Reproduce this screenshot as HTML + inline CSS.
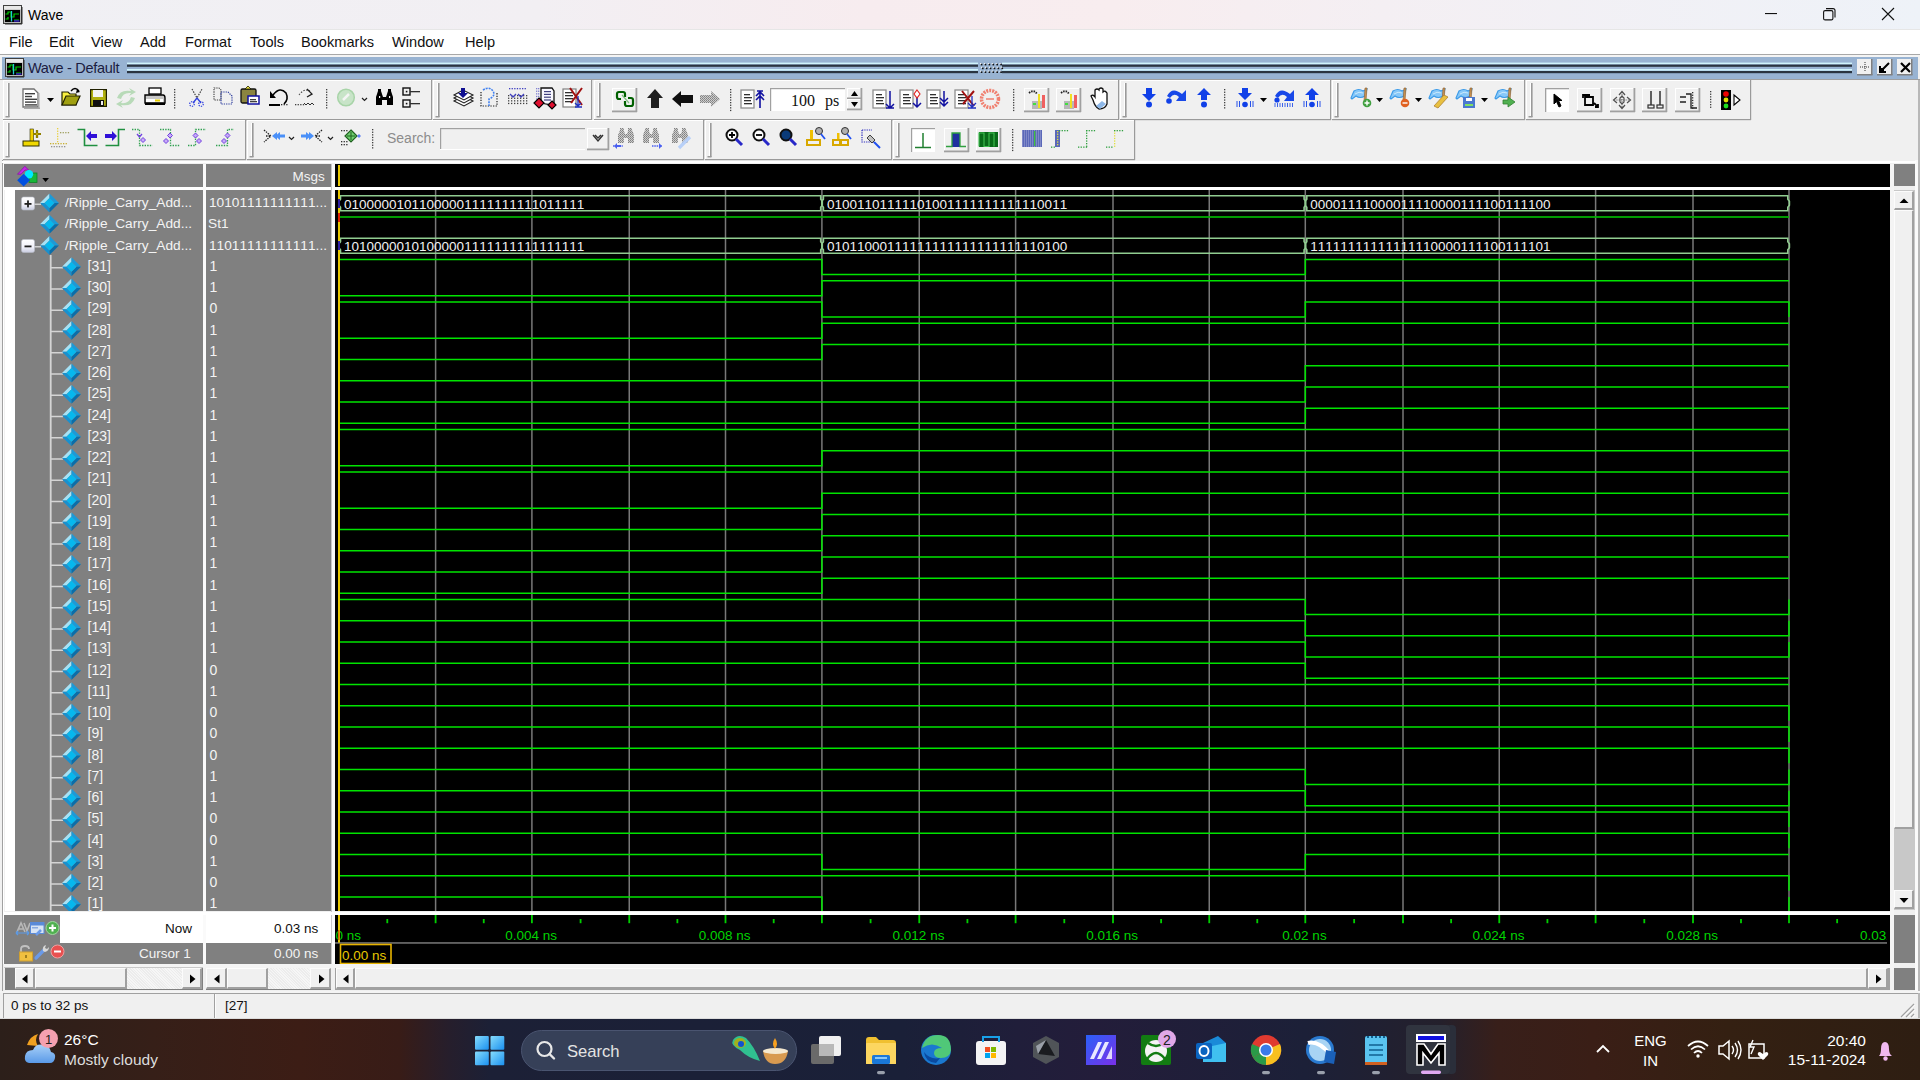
<!DOCTYPE html><html><head><meta charset="utf-8"><style>
*{margin:0;padding:0;box-sizing:border-box}
html,body{width:1920px;height:1080px;overflow:hidden;background:#f0f0f0;font-family:"Liberation Sans",sans-serif}
.a{position:absolute}
.t{position:absolute;white-space:nowrap;line-height:1}
svg{position:absolute;overflow:visible}
</style></head><body><div style="position:absolute;left:0px;top:0px;width:1920px;height:30px;background:linear-gradient(90deg,#f0f0f4 0%,#f2eff3 28%,#f7ecef 45%,#f8edef 58%,#f4eff3 72%,#eef2f8 100%)"></div>
<div style="position:absolute;left:0px;top:29px;width:1920px;height:1px;background:#e6e6e6"></div>
<div style="position:absolute;left:0px;top:30px;width:1920px;height:25px;background:#ffffff"></div>
<div style="position:absolute;left:0px;top:54px;width:1920px;height:1px;background:#a8a8a8"></div>
<div style="position:absolute;left:0px;top:55px;width:1920px;height:2px;background:#f4f4f4"></div>
<div style="position:absolute;left:2px;top:57px;width:1916px;height:22px;background:#98b3d2"></div>
<div style="position:absolute;left:0px;top:79px;width:1920px;height:1px;background:#a0a0a0"></div>
<div style="position:absolute;left:0px;top:80px;width:1920px;height:80px;background:#f0f0f0"></div>
<div style="position:absolute;left:2px;top:160px;width:1916px;height:832px;background:#f0f0f0"></div>
<div style="position:absolute;left:0px;top:992px;width:1920px;height:28px;background:#f0f0f0"></div>
<div style="position:absolute;left:4px;top:164px;width:199px;height:23px;background:#808080"></div>
<div style="position:absolute;left:206px;top:164px;width:125px;height:23px;background:#808080"></div>
<div style="position:absolute;left:292.5px;top:169.5px;font-size:13.5px;color:#f4f4f4;white-space:nowrap;line-height:1;">Msgs</div>
<div style="position:absolute;left:335px;top:164px;width:1555px;height:23px;background:#000"></div>
<div style="position:absolute;left:338px;top:165px;width:2px;height:21px;background:#e8c800"></div>
<div style="position:absolute;left:1894px;top:164px;width:21px;height:22px;background:#808080"></div>
<div style="position:absolute;left:4px;top:187px;width:1886px;height:3px;background:#fff"></div>
<div style="position:absolute;left:203px;top:164px;width:3px;height:800px;background:#fafafa"></div>
<div style="position:absolute;left:331px;top:164px;width:4px;height:800px;background:#fafafa"></div>
<div style="position:absolute;left:331px;top:164px;width:1px;height:800px;background:#c8c8c8"></div>
<div style="position:absolute;left:2px;top:160px;width:1px;height:832px;background:#a0a0a0"></div>
<div style="position:absolute;left:3px;top:164px;width:1px;height:800px;background:#ffffff"></div>
<div style="position:absolute;left:4px;top:190px;width:1px;height:721px;background:#f0f0f0"></div>
<div style="position:absolute;left:5px;top:190px;width:10px;height:721px;background:#fff"></div>
<div style="position:absolute;left:15px;top:190px;width:188px;height:721px;background:#808080"></div>
<div style="position:absolute;left:206px;top:190px;width:125px;height:721px;background:#808080"></div>
<div style="position:absolute;left:335px;top:190px;width:1555px;height:721px;background:#000"></div>
<div style="position:absolute;left:4px;top:911.6px;width:1886px;height:3.4px;background:#fff"></div>
<div style="position:absolute;left:4px;top:915px;width:56px;height:28px;background:#808080"></div>
<div style="position:absolute;left:60px;top:915px;width:143px;height:28px;background:#fff"></div>
<div style="position:absolute;left:206px;top:915px;width:125px;height:28px;background:#fff"></div>
<div style="position:absolute;left:335px;top:915px;width:1555px;height:28px;background:#000"></div>
<div style="position:absolute;left:165px;top:922px;font-size:13.5px;color:#101010;white-space:nowrap;line-height:1;">Now</div>
<div style="position:absolute;left:274px;top:922px;font-size:13.5px;color:#101010;white-space:nowrap;line-height:1;">0.03 ns</div>
<div style="position:absolute;left:4px;top:943px;width:199px;height:21px;background:#808080"></div>
<div style="position:absolute;left:206px;top:943px;width:125px;height:21px;background:#808080"></div>
<div style="position:absolute;left:335px;top:943px;width:1555px;height:21px;background:#000"></div>
<div style="position:absolute;left:335px;top:942px;width:1552px;height:1px;background:#5a5a5a"></div>
<div style="position:absolute;left:139px;top:947px;font-size:13.5px;color:#f4f4f4;white-space:nowrap;line-height:1;">Cursor 1</div>
<div style="position:absolute;left:274px;top:947px;font-size:13.5px;color:#f4f4f4;white-space:nowrap;line-height:1;">0.00 ns</div>
<div style="position:absolute;left:4px;top:964px;width:1886px;height:4px;background:#f4f4f4"></div>
<div style="position:absolute;left:1890px;top:164px;width:4px;height:827px;background:#f4f4f4"></div>
<div style="position:absolute;left:1894px;top:915px;width:21px;height:48px;background:#808080"></div>
<div style="position:absolute;left:1894px;top:968px;width:21px;height:22px;background:#808080"></div>
<svg style="left:0;top:0" width="1920" height="1080" viewBox="0 0 1920 1080"><defs><clipPath id="wc"><rect x="335" y="190" width="1555" height="721"/></clipPath></defs><g clip-path="url(#wc)" font-family="Liberation Sans"><rect x="434.85" y="190" width="1.5" height="721" fill="#787878"/><rect x="531.15" y="190" width="1.5" height="721" fill="#787878"/><rect x="628.50" y="190" width="1.5" height="721" fill="#787878"/><rect x="724.75" y="190" width="1.5" height="721" fill="#787878"/><rect x="821.15" y="190" width="1.5" height="721" fill="#787878"/><rect x="918.50" y="190" width="1.5" height="721" fill="#787878"/><rect x="1014.85" y="190" width="1.5" height="721" fill="#787878"/><rect x="1112.25" y="190" width="1.5" height="721" fill="#787878"/><rect x="1208.50" y="190" width="1.5" height="721" fill="#787878"/><rect x="1304.55" y="190" width="1.5" height="721" fill="#787878"/><rect x="1402.25" y="190" width="1.5" height="721" fill="#787878"/><rect x="1498.50" y="190" width="1.5" height="721" fill="#787878"/><rect x="1594.85" y="190" width="1.5" height="721" fill="#787878"/><rect x="1692.25" y="190" width="1.5" height="721" fill="#787878"/><rect x="1788.25" y="190" width="1.5" height="721" fill="#787878"/><rect x="339" y="216.15" width="1450" height="1.7" fill="#00b400"/><path d="M339,259.50 H821.9 V274.50 H1305.3 V259.50 H1789.0" fill="none" stroke="#00e400" stroke-width="1.55"/><path d="M339,295.75 H821.9 V280.75 H1305.3 H1789.0" fill="none" stroke="#00e400" stroke-width="1.55"/><path d="M339,302.00 H821.9 V317.00 H1305.3 V302.00 H1789.0 V317.00" fill="none" stroke="#00e400" stroke-width="1.55"/><path d="M339,338.25 H821.9 V323.25 H1305.3 H1789.0" fill="none" stroke="#00e400" stroke-width="1.55"/><path d="M339,359.50 H821.9 V344.50 H1305.3 H1789.0" fill="none" stroke="#00e400" stroke-width="1.55"/><path d="M339,380.75 H821.9 H1305.3 V365.75 H1789.0" fill="none" stroke="#00e400" stroke-width="1.55"/><path d="M339,402.00 H821.9 H1305.3 V387.00 H1789.0" fill="none" stroke="#00e400" stroke-width="1.55"/><path d="M339,423.25 H821.9 H1305.3 V408.25 H1789.0" fill="none" stroke="#00e400" stroke-width="1.55"/><path d="M339,429.50 H821.9 H1305.3 H1789.0" fill="none" stroke="#00e400" stroke-width="1.55"/><path d="M339,465.75 H821.9 V450.75 H1305.3 H1789.0" fill="none" stroke="#00e400" stroke-width="1.55"/><path d="M339,472.00 H821.9 H1305.3 H1789.0" fill="none" stroke="#00e400" stroke-width="1.55"/><path d="M339,508.25 H821.9 V493.25 H1305.3 H1789.0" fill="none" stroke="#00e400" stroke-width="1.55"/><path d="M339,529.50 H821.9 V514.50 H1305.3 H1789.0" fill="none" stroke="#00e400" stroke-width="1.55"/><path d="M339,550.75 H821.9 V535.75 H1305.3 H1789.0" fill="none" stroke="#00e400" stroke-width="1.55"/><path d="M339,572.00 H821.9 V557.00 H1305.3 H1789.0" fill="none" stroke="#00e400" stroke-width="1.55"/><path d="M339,593.25 H821.9 V578.25 H1305.3 H1789.0" fill="none" stroke="#00e400" stroke-width="1.55"/><path d="M339,599.50 H821.9 H1305.3 V614.50 H1789.0 V599.50" fill="none" stroke="#00e400" stroke-width="1.55"/><path d="M339,620.75 H821.9 H1305.3 V635.75 H1789.0 V620.75" fill="none" stroke="#00e400" stroke-width="1.55"/><path d="M339,642.00 H821.9 H1305.3 V657.00 H1789.0 V642.00" fill="none" stroke="#00e400" stroke-width="1.55"/><path d="M339,663.25 H821.9 H1305.3 V678.25 H1789.0" fill="none" stroke="#00e400" stroke-width="1.55"/><path d="M339,684.50 H821.9 H1305.3 H1789.0" fill="none" stroke="#00e400" stroke-width="1.55"/><path d="M339,705.75 H821.9 H1305.3 H1789.0 V720.75" fill="none" stroke="#00e400" stroke-width="1.55"/><path d="M339,727.00 H821.9 H1305.3 H1789.0 V742.00" fill="none" stroke="#00e400" stroke-width="1.55"/><path d="M339,748.25 H821.9 H1305.3 H1789.0 V763.25" fill="none" stroke="#00e400" stroke-width="1.55"/><path d="M339,769.50 H821.9 H1305.3 V784.50 H1789.0 V769.50" fill="none" stroke="#00e400" stroke-width="1.55"/><path d="M339,790.75 H821.9 H1305.3 V805.75 H1789.0 V790.75" fill="none" stroke="#00e400" stroke-width="1.55"/><path d="M339,812.00 H821.9 H1305.3 H1789.0 V827.00" fill="none" stroke="#00e400" stroke-width="1.55"/><path d="M339,833.25 H821.9 H1305.3 H1789.0 V848.25" fill="none" stroke="#00e400" stroke-width="1.55"/><path d="M339,854.50 H821.9 V869.50 H1305.3 V854.50 H1789.0" fill="none" stroke="#00e400" stroke-width="1.55"/><path d="M339,875.75 H821.9 H1305.3 H1789.0 V890.75" fill="none" stroke="#00e400" stroke-width="1.55"/><path d="M339,897.00 H821.9 V912.00 H1305.3 H1789.0 V897.00" fill="none" stroke="#00e400" stroke-width="1.55"/><path d="M340.5,195.75 H820.6999999999999 V199.25 L822.3,201.25 V205.25 L820.6999999999999,207.25 V210.75 H340.5 V207.25 L338.9,205.25 V201.25 L340.5,199.25 Z" fill="none" stroke="#90cc90" stroke-width="1.6"/><text x="344.0" y="208.55" font-size="13.5" fill="#f2f2f2" style="font-kerning:none">01000001011000001111111111011111</text><path d="M823.4,195.75 H1304.1 V199.25 L1305.7,201.25 V205.25 L1304.1,207.25 V210.75 H823.4 V207.25 L821.8,205.25 V201.25 L823.4,199.25 Z" fill="none" stroke="#90cc90" stroke-width="1.6"/><text x="826.9" y="208.55" font-size="13.5" fill="#f2f2f2" style="font-kerning:none">01001101111101001111111111110011</text><path d="M1306.8,195.75 H1787.8 V199.25 L1789.4,201.25 V205.25 L1787.8,207.25 V210.75 H1306.8 V207.25 L1305.2,205.25 V201.25 L1306.8,199.25 Z" fill="none" stroke="#90cc90" stroke-width="1.6"/><text x="1310.3" y="208.55" font-size="13.5" fill="#f2f2f2" style="font-kerning:none">00001111000011110000111100111100</text><path d="M340.5,238.25 H820.6999999999999 V241.75 L822.3,243.75 V247.75 L820.6999999999999,249.75 V253.25 H340.5 V249.75 L338.9,247.75 V243.75 L340.5,241.75 Z" fill="none" stroke="#90cc90" stroke-width="1.6"/><text x="344.0" y="251.05" font-size="13.5" fill="#f2f2f2" style="font-kerning:none">10100000101000001111111111111111</text><path d="M823.4,238.25 H1304.1 V241.75 L1305.7,243.75 V247.75 L1304.1,249.75 V253.25 H823.4 V249.75 L821.8,247.75 V243.75 L823.4,241.75 Z" fill="none" stroke="#90cc90" stroke-width="1.6"/><text x="826.9" y="251.05" font-size="13.5" fill="#f2f2f2" style="font-kerning:none">01011000111111111111111111110100</text><path d="M1306.8,238.25 H1787.8 V241.75 L1789.4,243.75 V247.75 L1787.8,249.75 V253.25 H1306.8 V249.75 L1305.2,247.75 V243.75 L1306.8,241.75 Z" fill="none" stroke="#90cc90" stroke-width="1.6"/><text x="1310.3" y="251.05" font-size="13.5" fill="#f2f2f2" style="font-kerning:none">11111111111111110000111100111101</text><rect x="338" y="190" width="2" height="721" fill="#e8c800"/><rect x="338" y="199" width="2" height="9" fill="#3020a0"/><rect x="338" y="213" width="2" height="9" fill="#e02000"/><rect x="338" y="241" width="2" height="9" fill="#3020a0"/></g></svg>
<svg style="left:0;top:0" width="1920" height="1080" viewBox="0 0 1920 1080"><defs><clipPath id="nc"><rect x="4" y="190" width="199" height="721"/></clipPath><clipPath id="vc"><rect x="206" y="190" width="125" height="721"/></clipPath></defs><g clip-path="url(#nc)" font-family="Liberation Sans"><defs><symbol id="dm" viewBox="0 0 19 19"><path d="M9.5,0 L0,9.5 L4.5,9.5 L9.5,4.5Z" fill="#a6e2f6"/><path d="M9.5,0 L19,9.5 L14.5,9.5 L9.5,4.5Z" fill="#1c9ad8"/><path d="M0,9.5 L9.5,19 L9.5,14.5 L4.5,9.5Z" fill="#1890cf"/><path d="M19,9.5 L9.5,19 L9.5,14.5 L14.5,9.5Z" fill="#0b6ea9"/><path d="M9.5,4.5 L14.5,9.5 L9.5,14.5 L4.5,9.5Z" fill="#06b8ee"/></symbol><linearGradient id="pb" x1="0" y1="0" x2="0" y2="1"><stop offset="0" stop-color="#ffffff"/><stop offset="0.6" stop-color="#f0f0f8"/><stop offset="1" stop-color="#c8cce0"/></linearGradient></defs><use href="#dm" x="40" y="193.50" width="19" height="19"/><rect x="34" y="203.50" width="7" height="1.5" fill="#d0d0d0"/><rect x="21.5" y="197.00" width="13" height="13" rx="2" fill="url(#pb)" stroke="#b8bcc8" stroke-width="0.6"/><rect x="24.5" y="203.00" width="7" height="1.8" fill="#202020"/><rect x="27.1" y="200.40" width="1.8" height="7" fill="#202020"/><text x="65" y="207.20" font-size="13.7" fill="#f4f4f4">/Ripple_Carry_Add...</text><use href="#dm" x="40" y="214.75" width="19" height="19"/><text x="65" y="228.45" font-size="13.7" fill="#f4f4f4">/Ripple_Carry_Add...</text><use href="#dm" x="40" y="236.00" width="19" height="19"/><rect x="34" y="246.00" width="7" height="1.5" fill="#d0d0d0"/><rect x="21.5" y="239.50" width="13" height="13" rx="2" fill="url(#pb)" stroke="#b8bcc8" stroke-width="0.6"/><rect x="24.5" y="245.50" width="7" height="1.8" fill="#202020"/><text x="65" y="249.70" font-size="13.7" fill="#f4f4f4">/Ripple_Carry_Add...</text><rect x="49.8" y="255" width="1.8" height="656" fill="#d4d4d4"/><rect x="50" y="267.00" width="13" height="1.5" fill="#d4d4d4"/><use href="#dm" x="62" y="257.25" width="19" height="19"/><text x="87.5" y="270.95" font-size="14" fill="#f4f4f4">[31]</text><rect x="50" y="288.25" width="13" height="1.5" fill="#d4d4d4"/><use href="#dm" x="62" y="278.50" width="19" height="19"/><text x="87.5" y="292.20" font-size="14" fill="#f4f4f4">[30]</text><rect x="50" y="309.50" width="13" height="1.5" fill="#d4d4d4"/><use href="#dm" x="62" y="299.75" width="19" height="19"/><text x="87.5" y="313.45" font-size="14" fill="#f4f4f4">[29]</text><rect x="50" y="330.75" width="13" height="1.5" fill="#d4d4d4"/><use href="#dm" x="62" y="321.00" width="19" height="19"/><text x="87.5" y="334.70" font-size="14" fill="#f4f4f4">[28]</text><rect x="50" y="352.00" width="13" height="1.5" fill="#d4d4d4"/><use href="#dm" x="62" y="342.25" width="19" height="19"/><text x="87.5" y="355.95" font-size="14" fill="#f4f4f4">[27]</text><rect x="50" y="373.25" width="13" height="1.5" fill="#d4d4d4"/><use href="#dm" x="62" y="363.50" width="19" height="19"/><text x="87.5" y="377.20" font-size="14" fill="#f4f4f4">[26]</text><rect x="50" y="394.50" width="13" height="1.5" fill="#d4d4d4"/><use href="#dm" x="62" y="384.75" width="19" height="19"/><text x="87.5" y="398.45" font-size="14" fill="#f4f4f4">[25]</text><rect x="50" y="415.75" width="13" height="1.5" fill="#d4d4d4"/><use href="#dm" x="62" y="406.00" width="19" height="19"/><text x="87.5" y="419.70" font-size="14" fill="#f4f4f4">[24]</text><rect x="50" y="437.00" width="13" height="1.5" fill="#d4d4d4"/><use href="#dm" x="62" y="427.25" width="19" height="19"/><text x="87.5" y="440.95" font-size="14" fill="#f4f4f4">[23]</text><rect x="50" y="458.25" width="13" height="1.5" fill="#d4d4d4"/><use href="#dm" x="62" y="448.50" width="19" height="19"/><text x="87.5" y="462.20" font-size="14" fill="#f4f4f4">[22]</text><rect x="50" y="479.50" width="13" height="1.5" fill="#d4d4d4"/><use href="#dm" x="62" y="469.75" width="19" height="19"/><text x="87.5" y="483.45" font-size="14" fill="#f4f4f4">[21]</text><rect x="50" y="500.75" width="13" height="1.5" fill="#d4d4d4"/><use href="#dm" x="62" y="491.00" width="19" height="19"/><text x="87.5" y="504.70" font-size="14" fill="#f4f4f4">[20]</text><rect x="50" y="522.00" width="13" height="1.5" fill="#d4d4d4"/><use href="#dm" x="62" y="512.25" width="19" height="19"/><text x="87.5" y="525.95" font-size="14" fill="#f4f4f4">[19]</text><rect x="50" y="543.25" width="13" height="1.5" fill="#d4d4d4"/><use href="#dm" x="62" y="533.50" width="19" height="19"/><text x="87.5" y="547.20" font-size="14" fill="#f4f4f4">[18]</text><rect x="50" y="564.50" width="13" height="1.5" fill="#d4d4d4"/><use href="#dm" x="62" y="554.75" width="19" height="19"/><text x="87.5" y="568.45" font-size="14" fill="#f4f4f4">[17]</text><rect x="50" y="585.75" width="13" height="1.5" fill="#d4d4d4"/><use href="#dm" x="62" y="576.00" width="19" height="19"/><text x="87.5" y="589.70" font-size="14" fill="#f4f4f4">[16]</text><rect x="50" y="607.00" width="13" height="1.5" fill="#d4d4d4"/><use href="#dm" x="62" y="597.25" width="19" height="19"/><text x="87.5" y="610.95" font-size="14" fill="#f4f4f4">[15]</text><rect x="50" y="628.25" width="13" height="1.5" fill="#d4d4d4"/><use href="#dm" x="62" y="618.50" width="19" height="19"/><text x="87.5" y="632.20" font-size="14" fill="#f4f4f4">[14]</text><rect x="50" y="649.50" width="13" height="1.5" fill="#d4d4d4"/><use href="#dm" x="62" y="639.75" width="19" height="19"/><text x="87.5" y="653.45" font-size="14" fill="#f4f4f4">[13]</text><rect x="50" y="670.75" width="13" height="1.5" fill="#d4d4d4"/><use href="#dm" x="62" y="661.00" width="19" height="19"/><text x="87.5" y="674.70" font-size="14" fill="#f4f4f4">[12]</text><rect x="50" y="692.00" width="13" height="1.5" fill="#d4d4d4"/><use href="#dm" x="62" y="682.25" width="19" height="19"/><text x="87.5" y="695.95" font-size="14" fill="#f4f4f4">[11]</text><rect x="50" y="713.25" width="13" height="1.5" fill="#d4d4d4"/><use href="#dm" x="62" y="703.50" width="19" height="19"/><text x="87.5" y="717.20" font-size="14" fill="#f4f4f4">[10]</text><rect x="50" y="734.50" width="13" height="1.5" fill="#d4d4d4"/><use href="#dm" x="62" y="724.75" width="19" height="19"/><text x="87.5" y="738.45" font-size="14" fill="#f4f4f4">[9]</text><rect x="50" y="755.75" width="13" height="1.5" fill="#d4d4d4"/><use href="#dm" x="62" y="746.00" width="19" height="19"/><text x="87.5" y="759.70" font-size="14" fill="#f4f4f4">[8]</text><rect x="50" y="777.00" width="13" height="1.5" fill="#d4d4d4"/><use href="#dm" x="62" y="767.25" width="19" height="19"/><text x="87.5" y="780.95" font-size="14" fill="#f4f4f4">[7]</text><rect x="50" y="798.25" width="13" height="1.5" fill="#d4d4d4"/><use href="#dm" x="62" y="788.50" width="19" height="19"/><text x="87.5" y="802.20" font-size="14" fill="#f4f4f4">[6]</text><rect x="50" y="819.50" width="13" height="1.5" fill="#d4d4d4"/><use href="#dm" x="62" y="809.75" width="19" height="19"/><text x="87.5" y="823.45" font-size="14" fill="#f4f4f4">[5]</text><rect x="50" y="840.75" width="13" height="1.5" fill="#d4d4d4"/><use href="#dm" x="62" y="831.00" width="19" height="19"/><text x="87.5" y="844.70" font-size="14" fill="#f4f4f4">[4]</text><rect x="50" y="862.00" width="13" height="1.5" fill="#d4d4d4"/><use href="#dm" x="62" y="852.25" width="19" height="19"/><text x="87.5" y="865.95" font-size="14" fill="#f4f4f4">[3]</text><rect x="50" y="883.25" width="13" height="1.5" fill="#d4d4d4"/><use href="#dm" x="62" y="873.50" width="19" height="19"/><text x="87.5" y="887.20" font-size="14" fill="#f4f4f4">[2]</text><rect x="50" y="904.50" width="13" height="1.5" fill="#d4d4d4"/><use href="#dm" x="62" y="894.75" width="19" height="19"/><text x="87.5" y="908.45" font-size="14" fill="#f4f4f4">[1]</text></g><g clip-path="url(#vc)" font-family="Liberation Sans"><text x="209" y="207.20" font-size="13.7" fill="#f4f4f4" style="font-kerning:none">10101111111111...</text><text x="208" y="228.45" font-size="13.7" fill="#f4f4f4" style="font-kerning:none">St1</text><text x="209" y="249.70" font-size="13.7" fill="#f4f4f4" style="font-kerning:none">11011111111111...</text><text x="209.5" y="270.95" font-size="14" fill="#f4f4f4">1</text><text x="209.5" y="292.20" font-size="14" fill="#f4f4f4">1</text><text x="209.5" y="313.45" font-size="14" fill="#f4f4f4">0</text><text x="209.5" y="334.70" font-size="14" fill="#f4f4f4">1</text><text x="209.5" y="355.95" font-size="14" fill="#f4f4f4">1</text><text x="209.5" y="377.20" font-size="14" fill="#f4f4f4">1</text><text x="209.5" y="398.45" font-size="14" fill="#f4f4f4">1</text><text x="209.5" y="419.70" font-size="14" fill="#f4f4f4">1</text><text x="209.5" y="440.95" font-size="14" fill="#f4f4f4">1</text><text x="209.5" y="462.20" font-size="14" fill="#f4f4f4">1</text><text x="209.5" y="483.45" font-size="14" fill="#f4f4f4">1</text><text x="209.5" y="504.70" font-size="14" fill="#f4f4f4">1</text><text x="209.5" y="525.95" font-size="14" fill="#f4f4f4">1</text><text x="209.5" y="547.20" font-size="14" fill="#f4f4f4">1</text><text x="209.5" y="568.45" font-size="14" fill="#f4f4f4">1</text><text x="209.5" y="589.70" font-size="14" fill="#f4f4f4">1</text><text x="209.5" y="610.95" font-size="14" fill="#f4f4f4">1</text><text x="209.5" y="632.20" font-size="14" fill="#f4f4f4">1</text><text x="209.5" y="653.45" font-size="14" fill="#f4f4f4">1</text><text x="209.5" y="674.70" font-size="14" fill="#f4f4f4">0</text><text x="209.5" y="695.95" font-size="14" fill="#f4f4f4">1</text><text x="209.5" y="717.20" font-size="14" fill="#f4f4f4">0</text><text x="209.5" y="738.45" font-size="14" fill="#f4f4f4">0</text><text x="209.5" y="759.70" font-size="14" fill="#f4f4f4">0</text><text x="209.5" y="780.95" font-size="14" fill="#f4f4f4">1</text><text x="209.5" y="802.20" font-size="14" fill="#f4f4f4">1</text><text x="209.5" y="823.45" font-size="14" fill="#f4f4f4">0</text><text x="209.5" y="844.70" font-size="14" fill="#f4f4f4">0</text><text x="209.5" y="865.95" font-size="14" fill="#f4f4f4">1</text><text x="209.5" y="887.20" font-size="14" fill="#f4f4f4">0</text><text x="209.5" y="908.45" font-size="14" fill="#f4f4f4">1</text></g></svg>
<svg style="left:0;top:0" width="60" height="200" viewBox="0 0 60 200"><path d="M24.8,166.3 L17.5,174.2 L21,174.2 L25,170 L28.8,170.2Z" fill="#c828e8" stroke="#8a10a8" stroke-width="0.8"/><rect x="29" y="173" width="8" height="9.5" fill="#18b838" stroke="#108028" stroke-width="0.8"/><circle cx="29" cy="174.2" r="4.2" fill="#00e8ff"/><path d="M23.6,173.7 L30,180.2 L23.6,186.6 L17.2,180.2Z" fill="#0050e0"/><path d="M42.3,178 L49,178 L45.6,182Z" fill="#000"/></svg>
<svg style="left:0;top:0" width="1920" height="1080" viewBox="0 0 1920 1080"><defs><clipPath id="tc"><rect x="335" y="915" width="1552" height="49"/></clipPath></defs><g clip-path="url(#tc)" font-family="Liberation Sans"><rect x="386.40" y="919" width="1.8" height="4.2" fill="#00d000"/><rect x="434.70" y="915" width="1.8" height="8.2" fill="#00d000"/><rect x="482.85" y="919" width="1.8" height="4.2" fill="#00d000"/><rect x="531.00" y="915" width="1.8" height="8.2" fill="#00d000"/><rect x="579.68" y="919" width="1.8" height="4.2" fill="#00d000"/><rect x="628.35" y="915" width="1.8" height="8.2" fill="#00d000"/><rect x="676.48" y="919" width="1.8" height="4.2" fill="#00d000"/><rect x="724.60" y="915" width="1.8" height="8.2" fill="#00d000"/><rect x="772.80" y="919" width="1.8" height="4.2" fill="#00d000"/><rect x="821.00" y="915" width="1.8" height="8.2" fill="#00d000"/><rect x="869.68" y="919" width="1.8" height="4.2" fill="#00d000"/><rect x="918.35" y="915" width="1.8" height="8.2" fill="#00d000"/><rect x="966.52" y="919" width="1.8" height="4.2" fill="#00d000"/><rect x="1014.70" y="915" width="1.8" height="8.2" fill="#00d000"/><rect x="1063.40" y="919" width="1.8" height="4.2" fill="#00d000"/><rect x="1112.10" y="915" width="1.8" height="8.2" fill="#00d000"/><rect x="1160.22" y="919" width="1.8" height="4.2" fill="#00d000"/><rect x="1208.35" y="915" width="1.8" height="8.2" fill="#00d000"/><rect x="1256.38" y="919" width="1.8" height="4.2" fill="#00d000"/><rect x="1304.40" y="915" width="1.8" height="8.2" fill="#00d000"/><rect x="1353.25" y="919" width="1.8" height="4.2" fill="#00d000"/><rect x="1402.10" y="915" width="1.8" height="8.2" fill="#00d000"/><rect x="1450.22" y="919" width="1.8" height="4.2" fill="#00d000"/><rect x="1498.35" y="915" width="1.8" height="8.2" fill="#00d000"/><rect x="1546.52" y="919" width="1.8" height="4.2" fill="#00d000"/><rect x="1594.70" y="915" width="1.8" height="8.2" fill="#00d000"/><rect x="1643.40" y="919" width="1.8" height="4.2" fill="#00d000"/><rect x="1692.10" y="915" width="1.8" height="8.2" fill="#00d000"/><rect x="1740.10" y="919" width="1.8" height="4.2" fill="#00d000"/><rect x="1788.10" y="915" width="1.8" height="8.2" fill="#00d000"/><rect x="1836.25" y="919" width="1.8" height="4.2" fill="#00d000"/><text x="531.1" y="940" font-size="13.5" fill="#00d400" text-anchor="middle">0.004 ns</text><text x="724.7" y="940" font-size="13.5" fill="#00d400" text-anchor="middle">0.008 ns</text><text x="918.5" y="940" font-size="13.5" fill="#00d400" text-anchor="middle">0.012 ns</text><text x="1112.2" y="940" font-size="13.5" fill="#00d400" text-anchor="middle">0.016 ns</text><text x="1304.5" y="940" font-size="13.5" fill="#00d400" text-anchor="middle">0.02 ns</text><text x="1498.5" y="940" font-size="13.5" fill="#00d400" text-anchor="middle">0.024 ns</text><text x="1692.2" y="940" font-size="13.5" fill="#00d400" text-anchor="middle">0.028 ns</text><text x="335.5" y="940" font-size="13.5" fill="#00d400">0 ns</text><text x="1860" y="940" font-size="13.5" fill="#00d400">0.032 ns</text><rect x="338" y="915" width="2" height="28" fill="#e8c800"/><rect x="338" y="930" width="1.5" height="10" fill="#c02000" opacity="0.6"/><rect x="335" y="942.6" width="1552" height="1.2" fill="#6a6a6a"/><rect x="340.5" y="944.5" width="50.5" height="19" fill="none" stroke="#e8b400" stroke-width="1.6"/><text x="342" y="960" font-size="13.5" fill="#e8c800">0.00 ns</text></g></svg>
<div style="position:absolute;left:4px;top:967px;width:199px;height:1px;background:#c8c8c8"></div>
<div style="position:absolute;left:5px;top:968px;width:198px;height:22px;background:#808080"></div>
<div style="position:absolute;left:206px;top:968px;width:125px;height:22px;background:#808080"></div>
<div style="position:absolute;left:335px;top:968px;width:1555px;height:22px;background:#a0a0a0"></div>
<div style="position:absolute;left:127px;top:968px;width:55px;height:21px;background-color:#f6f6f6;background-image:repeating-linear-gradient(45deg,#ececec 0 1px,transparent 1px 2px)"></div>
<div class="a" style="left:15px;top:968px;width:20px;height:21px;background:#f0f0f0;border-top:1px solid #fcfcfc;border-left:1px solid #fcfcfc;border-right:2px solid #a0a0a0;border-bottom:2px solid #a0a0a0"><svg style="left:5.0px;top:4.5px" width="8" height="10"><path d="M6.5,0.5 L1,5 L6.5,9.5Z" fill="#000"/></svg></div>
<div class="a" style="left:35px;top:968px;width:92px;height:21px;background:#f0f0f0;border-top:1px solid #fcfcfc;border-left:1px solid #fcfcfc;border-right:2px solid #a0a0a0;border-bottom:2px solid #a0a0a0"></div>
<div class="a" style="left:182px;top:968px;width:20px;height:21px;background:#f0f0f0;border-top:1px solid #fcfcfc;border-left:1px solid #fcfcfc;border-right:2px solid #a0a0a0;border-bottom:2px solid #a0a0a0"><svg style="left:6.0px;top:4.5px" width="8" height="10"><path d="M1,0.5 L6.5,5 L1,9.5Z" fill="#000"/></svg></div>
<div style="position:absolute;left:268px;top:968px;width:43px;height:21px;background-color:#f6f6f6;background-image:repeating-linear-gradient(45deg,#ececec 0 1px,transparent 1px 2px)"></div>
<div class="a" style="left:206px;top:968px;width:21px;height:21px;background:#f0f0f0;border-top:1px solid #fcfcfc;border-left:1px solid #fcfcfc;border-right:2px solid #a0a0a0;border-bottom:2px solid #a0a0a0"><svg style="left:5.5px;top:4.5px" width="8" height="10"><path d="M6.5,0.5 L1,5 L6.5,9.5Z" fill="#000"/></svg></div>
<div class="a" style="left:227px;top:968px;width:41px;height:21px;background:#f0f0f0;border-top:1px solid #fcfcfc;border-left:1px solid #fcfcfc;border-right:2px solid #a0a0a0;border-bottom:2px solid #a0a0a0"></div>
<div class="a" style="left:310px;top:968px;width:21px;height:21px;background:#f0f0f0;border-top:1px solid #fcfcfc;border-left:1px solid #fcfcfc;border-right:2px solid #a0a0a0;border-bottom:2px solid #a0a0a0"><svg style="left:6.5px;top:4.5px" width="8" height="10"><path d="M1,0.5 L6.5,5 L1,9.5Z" fill="#000"/></svg></div>
<div class="a" style="left:336px;top:968px;width:19px;height:21px;background:#f0f0f0;border-top:1px solid #fcfcfc;border-left:1px solid #fcfcfc;border-right:2px solid #a0a0a0;border-bottom:2px solid #a0a0a0"><svg style="left:4.5px;top:4.5px" width="8" height="10"><path d="M6.5,0.5 L1,5 L6.5,9.5Z" fill="#000"/></svg></div>
<div class="a" style="left:355px;top:968px;width:1513px;height:21px;background:#f0f0f0;border-top:1px solid #fcfcfc;border-left:1px solid #fcfcfc;border-right:2px solid #a0a0a0;border-bottom:2px solid #a0a0a0"></div>
<div class="a" style="left:1868px;top:968px;width:20px;height:21px;background:#f0f0f0;border-top:1px solid #fcfcfc;border-left:1px solid #fcfcfc;border-right:2px solid #a0a0a0;border-bottom:2px solid #a0a0a0"><svg style="left:6.0px;top:4.5px" width="8" height="10"><path d="M1,0.5 L6.5,5 L1,9.5Z" fill="#000"/></svg></div>
<div style="position:absolute;left:1894px;top:190px;width:21px;height:720px;background:#c8c8c8"></div>
<div class="a" style="left:1894px;top:191px;width:20px;height:19px;background:#f0f0f0;border-top:1px solid #fcfcfc;border-left:1px solid #fcfcfc;border-right:2px solid #a0a0a0;border-bottom:2px solid #a0a0a0"><svg style="left:4.0px;top:4.5px" width="10" height="8"><path d="M0.5,6 L5,1.5 L9.5,6Z" fill="#000"/></svg></div>
<div class="a" style="left:1894px;top:210px;width:20px;height:619px;background:#f0f0f0;border-top:1px solid #fcfcfc;border-left:1px solid #fcfcfc;border-right:2px solid #a0a0a0;border-bottom:2px solid #a0a0a0"></div>
<div class="a" style="left:1894px;top:890px;width:20px;height:19px;background:#f0f0f0;border-top:1px solid #fcfcfc;border-left:1px solid #fcfcfc;border-right:2px solid #a0a0a0;border-bottom:2px solid #a0a0a0"><svg style="left:4.0px;top:5.5px" width="10" height="8"><path d="M0.5,1 L5,6 L9.5,1Z" fill="#000"/></svg></div>
<div style="position:absolute;left:1915px;top:160px;width:3px;height:832px;background:#fafafa"></div>
<div style="position:absolute;left:1918px;top:80px;width:1.5px;height:938px;background:#b8b8b8"></div>
<div style="position:absolute;left:0px;top:991px;width:1920px;height:2px;background:#f4f4f4"></div>
<div style="position:absolute;left:3px;top:993px;width:1915px;height:1px;background:#a0a0a0"></div>
<div style="position:absolute;left:3px;top:993px;width:1px;height:25px;background:#a0a0a0"></div>
<div style="position:absolute;left:214px;top:994px;width:1px;height:24px;background:#a0a0a0"></div>
<div style="position:absolute;left:215px;top:994px;width:1px;height:24px;background:#fcfcfc"></div>
<div style="position:absolute;left:11px;top:999px;font-size:13.5px;color:#111;white-space:nowrap;line-height:1;">0 ps to 32 ps</div>
<div style="position:absolute;left:225px;top:999px;font-size:13.5px;color:#111;white-space:nowrap;line-height:1;">[27]</div>
<div style="position:absolute;left:0px;top:1018px;width:1920px;height:2px;background:#dcdcdc"></div>
<svg style="left:1895px;top:1000px" width="22" height="20" viewBox="0 0 22 20"><path d="M6,17 L19,4 M11,17 L19,9 M16,17 L19,14" stroke="#a0a0a0" stroke-width="1.2"/><path d="M7,17.8 L19.8,5 M12,17.8 L19.8,10 M17,17.8 L19.8,15" stroke="#ffffff" stroke-width="0.8"/></svg>
<svg style="left:0;top:0" width="1920" height="1080" viewBox="0 0 1920 1080" font-family="Liberation Sans"><rect x="3" y="80" width="429" height="1" fill="#ffffff" /><rect x="3" y="80" width="1" height="40" fill="#ffffff" /><rect x="431" y="80" width="1.2" height="40" fill="#9a9a9a" /><rect x="3" y="119" width="429" height="1.2" fill="#9a9a9a" /><rect x="7" y="83" width="1" height="34" fill="#ffffff" /><rect x="8" y="83" width="1.6" height="34" fill="#9a9a9a" /><rect x="5.5" y="116" width="4" height="1.5" fill="#9a9a9a" /><path d="M23,89 H34 L38,93 V107 H23Z" fill="#ffffff" stroke="#707070" stroke-width="1.3" /><rect x="38" y="93" width="1.5" height="16" fill="#a8a8a8" /><rect x="24" y="107.5" width="16" height="1.5" fill="#a8a8a8" /><rect x="25" y="93.0" width="10" height="1.4" fill="#404040" /><rect x="25" y="95.8" width="7" height="1.4" fill="#404040" /><rect x="25" y="98.6" width="12" height="1.4" fill="#404040" /><rect x="25" y="101.4" width="11" height="1.4" fill="#404040" /><rect x="25" y="104.2" width="12" height="1.4" fill="#404040" /><path d="M47,98 H54 L50.5,102Z" fill="#000" /><path d="M62,92 H68 L70,94 H76 V105 H62Z" fill="#f8f040" stroke="#202000" stroke-width="1.2" /><path d="M62,105 L66,96 H80 L76,105Z" fill="#a0a010" stroke="#202000" stroke-width="1.2" /><path d="M71,91 Q75,86 79,91" fill="none" stroke="#000" stroke-width="1.4" /><path d="M77,89 L80,92 L76,93Z" fill="#000" /><rect x="90" y="89" width="17" height="18" fill="#b0b010" /><path d="M90.6,89.6 H106.4 V106.4 H90.6Z" fill="none" stroke="#202000" stroke-width="1.2" /><rect x="93" y="90" width="10" height="7" fill="#f4f4f4" /><rect x="93" y="100" width="11" height="6" fill="#101010" /><rect x="101" y="101" width="2" height="4" fill="#f0f0f0" /><path d="M117,98 Q120,89 131,91 L129,88 L136,92 L129,96 L131,93 Q123,92 121,99Z" fill="#b8dab8" /><path d="M135,98 Q132,107 121,105 L123,108 L116,104 L123,100 L121,103 Q129,104 131,97Z" fill="#b8dab8" /><rect x="149" y="88" width="12" height="6" fill="#ffffff" stroke="#000" stroke-width="1.3"/><path d="M145,95 H163 Q165,95 165,98 V103 H145Z" fill="#c8c8c8" stroke="#000" stroke-width="1.4" /><rect x="146" y="99" width="17" height="3" fill="#ffffff" /><rect x="155" y="99.5" width="5" height="2" fill="#e8d000" /><rect x="145" y="103" width="20" height="2" fill="#000" /><rect x="174" y="89" width="1.3" height="1.3" fill="#404040" /><rect x="174" y="91.6" width="1.3" height="1.3" fill="#404040" /><rect x="174" y="94.19999999999999" width="1.3" height="1.3" fill="#404040" /><rect x="174" y="96.79999999999998" width="1.3" height="1.3" fill="#404040" /><rect x="174" y="99.39999999999998" width="1.3" height="1.3" fill="#404040" /><rect x="174" y="101.99999999999997" width="1.3" height="1.3" fill="#404040" /><rect x="174" y="104.59999999999997" width="1.3" height="1.3" fill="#404040" /><rect x="174" y="107.19999999999996" width="1.3" height="1.3" fill="#404040" /><path d="M192,89 L197,98 L202,89" fill="none" stroke="#404040" stroke-width="1.2" stroke-dasharray="1.5 1.2"/><path d="M197,98 L193,103 M197,98 L201,103" fill="none" stroke="#3040e0" stroke-width="1.3" /><circle cx="192" cy="104" r="2.3" fill="none" stroke="#3040e0" stroke-width="1.2" stroke-dasharray="1.2 1"/><circle cx="201" cy="104" r="2.3" fill="none" stroke="#3040e0" stroke-width="1.2" stroke-dasharray="1.2 1"/><path d="M214,88 H219 L221,90 V100 H214Z" fill="none" stroke="#404040" stroke-width="1.1" stroke-dasharray="1.3 1"/><path d="M221,92 H228 L232,96 V104 H221Z" fill="none" stroke="#3040a0" stroke-width="1.2" stroke-dasharray="1.3 1"/><rect x="241" y="89" width="15" height="14" fill="#8a8440" stroke="#101010" stroke-width="1.3" rx="1.5"/><path d="M245,89 L248,86 L251,89Z" fill="#e8e040" stroke="#202000" stroke-width="0.8" /><rect x="248" y="96" width="11" height="8" fill="#ffffff" stroke="#1010a0" stroke-width="1.5"/><rect x="250" y="99" width="6" height="1.3" fill="#404040" /><rect x="250" y="101" width="7" height="1.3" fill="#404040" /><path d="M273,95 Q280,86 286,93 Q289,99 284,104" fill="none" stroke="#000" stroke-width="1.6" /><path d="M270,91 L270,98 L276,98Z" fill="#000" /><rect x="269" y="104" width="11" height="2" fill="#000" /><rect x="281" y="104" width="1.3" height="1.3" fill="#303030" /><rect x="283.6" y="104" width="1.3" height="1.3" fill="#303030" /><rect x="286.20000000000005" y="104" width="1.3" height="1.3" fill="#303030" /><path d="M299,95 Q304,88 310,91" fill="none" stroke="#404040" stroke-width="1.1" stroke-dasharray="1.5 1.5"/><path d="M307,89 L312,94 L307,97" fill="none" stroke="#202020" stroke-width="1.3" /><rect x="295" y="104" width="1.3" height="1.3" fill="#404040" /><rect x="297.6" y="104" width="1.3" height="1.3" fill="#404040" /><rect x="300.20000000000005" y="104" width="1.3" height="1.3" fill="#404040" /><rect x="302.80000000000007" y="104" width="1.3" height="1.3" fill="#404040" /><path d="M304,103 L306,105 L308,103 L310,105 L312,103 L314,105" fill="none" stroke="#303030" stroke-width="1" /><rect x="326" y="89" width="1.3" height="1.3" fill="#404040" /><rect x="326" y="91.6" width="1.3" height="1.3" fill="#404040" /><rect x="326" y="94.19999999999999" width="1.3" height="1.3" fill="#404040" /><rect x="326" y="96.79999999999998" width="1.3" height="1.3" fill="#404040" /><rect x="326" y="99.39999999999998" width="1.3" height="1.3" fill="#404040" /><rect x="326" y="101.99999999999997" width="1.3" height="1.3" fill="#404040" /><rect x="326" y="104.59999999999997" width="1.3" height="1.3" fill="#404040" /><rect x="326" y="107.19999999999996" width="1.3" height="1.3" fill="#404040" /><circle cx="346" cy="97.5" r="8.3" fill="#c8e4c8" stroke="#a8d4a8" stroke-width="1.5"/><path d="M343,100 L349,94" fill="none" stroke="#f4f4f4" stroke-width="2.5" /><path d="M362,98 L364.5,100.5 L367,98" fill="none" stroke="#202020" stroke-width="1.2" /><path d="M376,105 V97 L378,91 V89 H381 V91 L383,97 H386 L388,91 V89 H391 V91 L393,97 V105 H387 V100 H382 V105Z" fill="#000" /><rect x="379" y="96" width="1.2" height="2" fill="#f0f0f0" /><rect x="389" y="96" width="1.2" height="2" fill="#f0f0f0" /><rect x="403" y="88" width="7" height="7" fill="none" stroke="#101010" stroke-width="1.4"/><rect x="405.8" y="90.8" width="1.6" height="1.6" fill="#101010" /><rect x="410" y="91" width="10" height="1.3" fill="#303030" /><rect x="403" y="100" width="7" height="7" fill="none" stroke="#101010" stroke-width="1.4"/><rect x="405.8" y="102.8" width="1.6" height="1.6" fill="#101010" /><rect x="410" y="103" width="10" height="1.3" fill="#303030" /><rect x="433" y="80" width="159" height="1" fill="#ffffff" /><rect x="433" y="80" width="1" height="40" fill="#ffffff" /><rect x="591" y="80" width="1.2" height="40" fill="#9a9a9a" /><rect x="433" y="119" width="159" height="1.2" fill="#9a9a9a" /><rect x="437" y="83" width="1" height="34" fill="#ffffff" /><rect x="438" y="83" width="1.6" height="34" fill="#9a9a9a" /><rect x="435.5" y="116" width="4" height="1.5" fill="#9a9a9a" /><path d="M454,101 L463,96 L473,101 L464,106Z" fill="#ffffff" stroke="#202020" stroke-width="1.1" /><path d="M454,98 L463,93 L473,98 L464,103Z" fill="#ffffff" stroke="#202020" stroke-width="1.1" /><path d="M454,95 L463,90 L473,95 L464,100Z" fill="#ffffff" stroke="#202020" stroke-width="1.1" /><path d="M461,88 H465 V93 H468 L463,98 L458,93 H461Z" fill="#101090" /><path d="M481,92 V106 H497 V92" fill="none" stroke="#202020" stroke-width="1.2" stroke-dasharray="1.3 1.3"/><path d="M483,90 Q489,86 493,91 Q496,96 489,99 V106" fill="none" stroke="#4080f0" stroke-width="1.6" stroke-dasharray="2 1"/><rect x="508" y="95" width="1.3" height="1.3" fill="#404040" /><rect x="508" y="97.6" width="1.3" height="1.3" fill="#404040" /><rect x="508" y="100.19999999999999" width="1.3" height="1.3" fill="#404040" /><rect x="508" y="102.79999999999998" width="1.3" height="1.3" fill="#404040" /><rect x="511" y="95" width="1.3" height="1.3" fill="#404040" /><rect x="511" y="97.6" width="1.3" height="1.3" fill="#404040" /><rect x="511" y="100.19999999999999" width="1.3" height="1.3" fill="#404040" /><rect x="511" y="102.79999999999998" width="1.3" height="1.3" fill="#404040" /><rect x="514" y="95" width="1.3" height="1.3" fill="#404040" /><rect x="514" y="97.6" width="1.3" height="1.3" fill="#404040" /><rect x="514" y="100.19999999999999" width="1.3" height="1.3" fill="#404040" /><rect x="514" y="102.79999999999998" width="1.3" height="1.3" fill="#404040" /><rect x="517" y="95" width="1.3" height="1.3" fill="#404040" /><rect x="517" y="97.6" width="1.3" height="1.3" fill="#404040" /><rect x="517" y="100.19999999999999" width="1.3" height="1.3" fill="#404040" /><rect x="517" y="102.79999999999998" width="1.3" height="1.3" fill="#404040" /><rect x="520" y="95" width="1.3" height="1.3" fill="#404040" /><rect x="520" y="97.6" width="1.3" height="1.3" fill="#404040" /><rect x="520" y="100.19999999999999" width="1.3" height="1.3" fill="#404040" /><rect x="520" y="102.79999999999998" width="1.3" height="1.3" fill="#404040" /><rect x="523" y="95" width="1.3" height="1.3" fill="#404040" /><rect x="523" y="97.6" width="1.3" height="1.3" fill="#404040" /><rect x="523" y="100.19999999999999" width="1.3" height="1.3" fill="#404040" /><rect x="523" y="102.79999999999998" width="1.3" height="1.3" fill="#404040" /><rect x="526" y="95" width="1.3" height="1.3" fill="#404040" /><rect x="526" y="97.6" width="1.3" height="1.3" fill="#404040" /><rect x="526" y="100.19999999999999" width="1.3" height="1.3" fill="#404040" /><rect x="526" y="102.79999999999998" width="1.3" height="1.3" fill="#404040" /><path d="M510,94 L513,97 L516,94 M518,94 L521,97 L524,94" fill="none" stroke="#4040c0" stroke-width="1.3" /><rect x="509" y="88" width="1.3" height="1.3" fill="#4040c0" /><rect x="511.6" y="88" width="1.3" height="1.3" fill="#4040c0" /><rect x="514.2" y="88" width="1.3" height="1.3" fill="#4040c0" /><rect x="516.8000000000001" y="88" width="1.3" height="1.3" fill="#4040c0" /><rect x="519.4000000000001" y="88" width="1.3" height="1.3" fill="#4040c0" /><rect x="522.0000000000001" y="88" width="1.3" height="1.3" fill="#4040c0" /><rect x="524.6000000000001" y="88" width="1.3" height="1.3" fill="#4040c0" /><rect x="536" y="88" width="1.3" height="1.3" fill="#8080d0" /><rect x="536" y="90.6" width="1.3" height="1.3" fill="#8080d0" /><rect x="536" y="93.19999999999999" width="1.3" height="1.3" fill="#8080d0" /><rect x="536" y="95.79999999999998" width="1.3" height="1.3" fill="#8080d0" /><rect x="536" y="98.39999999999998" width="1.3" height="1.3" fill="#8080d0" /><rect x="538" y="88" width="1.3" height="1.3" fill="#8080d0" /><rect x="538" y="90.6" width="1.3" height="1.3" fill="#8080d0" /><rect x="538" y="93.19999999999999" width="1.3" height="1.3" fill="#8080d0" /><rect x="538" y="95.79999999999998" width="1.3" height="1.3" fill="#8080d0" /><rect x="538" y="98.39999999999998" width="1.3" height="1.3" fill="#8080d0" /><path d="M541,88 H552 L554,91 V103 Q547,106 541,102Z" fill="#f8f8ff" stroke="#101010" stroke-width="1.3" /><rect x="544" y="91.0" width="7" height="1.2" fill="#404080" /><rect x="544" y="93.8" width="7" height="1.2" fill="#404080" /><rect x="544" y="96.6" width="7" height="1.2" fill="#404080" /><rect x="544" y="99.4" width="7" height="1.2" fill="#404080" /><path d="M539,98 L544,103 L539,108 L534,103Z" fill="#e01030" stroke="#000" stroke-width="1.2" /><path d="M552,101 L556,105 L552,109 L548,105Z" fill="#e01030" stroke="#000" stroke-width="1.2" /><rect x="563" y="89" width="13" height="18" fill="#ffffff" stroke="#808080" stroke-width="1.2"/><rect x="565" y="92" width="8" height="1.3" fill="#303030" /><rect x="565" y="95" width="8" height="1.3" fill="#303030" /><rect x="565" y="98" width="8" height="1.3" fill="#303030" /><rect x="565" y="101" width="8" height="1.3" fill="#303030" /><path d="M570,88 L582,105 M582,88 L571,103" fill="none" stroke="#a01010" stroke-width="2" /><path d="M578,96 V106 M575,103 L578,106 L581,103 M575,107 H582" fill="none" stroke="#2030c0" stroke-width="1.3" /><rect x="594" y="80" width="525" height="1" fill="#ffffff" /><rect x="594" y="80" width="1" height="40" fill="#ffffff" /><rect x="1118" y="80" width="1.2" height="40" fill="#9a9a9a" /><rect x="594" y="119" width="525" height="1.2" fill="#9a9a9a" /><rect x="598" y="83" width="1" height="34" fill="#ffffff" /><rect x="599" y="83" width="1.6" height="34" fill="#9a9a9a" /><rect x="596.5" y="116" width="4" height="1.5" fill="#9a9a9a" /><rect x="612" y="88" width="25" height="24" fill="#f0f0f0" /><rect x="612" y="88" width="25" height="1" fill="#ffffff" /><rect x="612" y="88" width="1" height="24" fill="#ffffff" /><rect x="635.5" y="88" width="1.8" height="24" fill="#a0a0a0" /><rect x="612" y="110.5" width="25" height="1.8" fill="#a0a0a0" /><path d="M617,94 Q617,92 619,92 H623 Q625,92 625,94 V97 M628,98 H631 Q633,98 633,100 V104 Q633,106 631,106 H627 Q625,106 625,104 V101 M621,99 H619 Q617,99 617,97 V94" fill="none" stroke="#006000" stroke-width="2.2" /><path d="M622,95 L629,103" fill="none" stroke="#80c080" stroke-width="1.2" /><path d="M655,89 L663,98 H659 V108 H651 V98 H647Z" fill="#202020" /><path d="M672,99 L681,91 V95 H693 V103 H681 V107Z" fill="#101010" /><path d="M720,99 L711,91 V95 H700 V103 H711 V107Z" fill="url(#chk)" /><rect x="730" y="89" width="1.3" height="1.3" fill="#404040" /><rect x="730" y="91.6" width="1.3" height="1.3" fill="#404040" /><rect x="730" y="94.19999999999999" width="1.3" height="1.3" fill="#404040" /><rect x="730" y="96.79999999999998" width="1.3" height="1.3" fill="#404040" /><rect x="730" y="99.39999999999998" width="1.3" height="1.3" fill="#404040" /><rect x="730" y="101.99999999999997" width="1.3" height="1.3" fill="#404040" /><rect x="730" y="104.59999999999997" width="1.3" height="1.3" fill="#404040" /><rect x="730" y="107.19999999999996" width="1.3" height="1.3" fill="#404040" /><rect x="730" y="109.79999999999995" width="1.3" height="1.3" fill="#404040" /><rect x="741" y="90" width="13" height="18" fill="#ffffff" stroke="#909090" stroke-width="1.3"/><rect x="744" y="94" width="6" height="1.3" fill="#303030" /><rect x="744" y="97" width="8" height="1.3" fill="#303030" /><rect x="744" y="100" width="7" height="1.3" fill="#303030" /><rect x="744" y="103" width="8" height="1.3" fill="#303030" /><path d="M757,91 H763 M760,91 V108 M756,96 L760,92 L764,96 M756,100 L760,96 L764,100" fill="none" stroke="#1010a0" stroke-width="1.6" /><rect x="770" y="88" width="75" height="23" fill="#ffffff" /><rect x="770" y="88" width="75" height="1.2" fill="#a0a0a0" /><rect x="770" y="88" width="1.2" height="23" fill="#a0a0a0" /><text x="791" y="106" font-family="Liberation Serif" font-size="16" fill="#101010">100</text><text x="825" y="106" font-family="Liberation Serif" font-size="16" fill="#101010">ps</text><rect x="847" y="88" width="15" height="11" fill="#f0f0f0" /><rect x="847" y="88" width="15" height="1" fill="#ffffff" /><rect x="847" y="88" width="1" height="11" fill="#ffffff" /><rect x="860.5" y="88" width="1.8" height="11" fill="#a0a0a0" /><rect x="847" y="97.5" width="15" height="1.8" fill="#a0a0a0" /><rect x="847" y="99" width="15" height="11" fill="#f0f0f0" /><rect x="847" y="99" width="15" height="1" fill="#ffffff" /><rect x="847" y="99" width="1" height="11" fill="#ffffff" /><rect x="860.5" y="99" width="1.8" height="11" fill="#a0a0a0" /><rect x="847" y="108.5" width="15" height="1.8" fill="#a0a0a0" /><path d="M851,96 L854.5,91 L858,96Z" fill="#000" /><path d="M851,102 L854.5,107 L858,102Z" fill="#000" /><rect x="873" y="90" width="13" height="18" fill="#ffffff" stroke="#909090" stroke-width="1.3"/><rect x="876" y="94" width="6" height="1.3" fill="#303030" /><rect x="876" y="97" width="8" height="1.3" fill="#303030" /><rect x="876" y="100" width="7" height="1.3" fill="#303030" /><rect x="876" y="103" width="8" height="1.3" fill="#303030" /><path d="M890,91 V108 M886,104 L890,108 L894,104 M886,108 H894" fill="none" stroke="#1010a0" stroke-width="1.5" /><rect x="900" y="90" width="13" height="18" fill="#ffffff" stroke="#909090" stroke-width="1.3"/><rect x="903" y="94" width="6" height="1.3" fill="#303030" /><rect x="903" y="97" width="8" height="1.3" fill="#303030" /><rect x="903" y="100" width="7" height="1.3" fill="#303030" /><rect x="903" y="103" width="8" height="1.3" fill="#303030" /><path d="M917,97 V107 M913,103 L917,107 L921,103" fill="none" stroke="#1010a0" stroke-width="1.5" /><path d="M917,90 L920,94 L917,98 L914,94Z" fill="#fff" stroke="#e02020" stroke-width="1.1" /><rect x="927" y="90" width="13" height="18" fill="#ffffff" stroke="#909090" stroke-width="1.3"/><rect x="930" y="94" width="6" height="1.3" fill="#303030" /><rect x="930" y="97" width="8" height="1.3" fill="#303030" /><rect x="930" y="100" width="7" height="1.3" fill="#303030" /><rect x="930" y="103" width="8" height="1.3" fill="#303030" /><path d="M944,91 V106 M940,98 L944,102 L948,98 M940,102 L944,106 L948,102" fill="none" stroke="#1010a0" stroke-width="1.5" /><rect x="955" y="90" width="13" height="18" fill="#ffffff" stroke="#909090" stroke-width="1.3"/><rect x="958" y="94" width="6" height="1.3" fill="#303030" /><rect x="958" y="97" width="8" height="1.3" fill="#303030" /><rect x="958" y="100" width="7" height="1.3" fill="#303030" /><rect x="958" y="103" width="8" height="1.3" fill="#303030" /><path d="M962,91 L974,106 M974,91 L963,104" fill="none" stroke="#a01010" stroke-width="2" /><path d="M972,96 V107 M968,103 L972,107 L976,103 M968,108 H976" fill="none" stroke="#2030c0" stroke-width="1.3" /><circle cx="990" cy="99" r="8.5" fill="none" stroke="#f08070" stroke-width="3.5" stroke-dasharray="2 1"/><path d="M986,99 H994" fill="none" stroke="#f08070" stroke-width="1.5" /><rect x="1013" y="89" width="1.3" height="1.3" fill="#404040" /><rect x="1013" y="91.6" width="1.3" height="1.3" fill="#404040" /><rect x="1013" y="94.19999999999999" width="1.3" height="1.3" fill="#404040" /><rect x="1013" y="96.79999999999998" width="1.3" height="1.3" fill="#404040" /><rect x="1013" y="99.39999999999998" width="1.3" height="1.3" fill="#404040" /><rect x="1013" y="101.99999999999997" width="1.3" height="1.3" fill="#404040" /><rect x="1013" y="104.59999999999997" width="1.3" height="1.3" fill="#404040" /><rect x="1013" y="107.19999999999996" width="1.3" height="1.3" fill="#404040" /><rect x="1013" y="109.79999999999995" width="1.3" height="1.3" fill="#404040" /><rect x="1024" y="88" width="25" height="24" fill="#f0f0f0" /><rect x="1024" y="88" width="25" height="1" fill="#ffffff" /><rect x="1024" y="88" width="1" height="24" fill="#ffffff" /><rect x="1047.5" y="88" width="1.8" height="24" fill="#a0a0a0" /><rect x="1024" y="110.5" width="25" height="1.8" fill="#a0a0a0" /><rect x="1056" y="88" width="25" height="24" fill="#f0f0f0" /><rect x="1056" y="88" width="25" height="1" fill="#ffffff" /><rect x="1056" y="88" width="1" height="24" fill="#ffffff" /><rect x="1079.5" y="88" width="1.8" height="24" fill="#a0a0a0" /><rect x="1056" y="110.5" width="25" height="1.8" fill="#a0a0a0" /><path d="M1029,93 Q1034,89 1037,94" fill="none" stroke="#202020" stroke-width="1.8" stroke-dasharray="1.5 1"/><rect x="1032" y="101" width="10" height="8" fill="#a0a0a0" opacity="0.7"/><rect x="1038" y="94" width="2" height="14" fill="#f0e020" /><rect x="1042" y="95" width="3" height="13" fill="#f06060" /><rect x="1033" y="103" width="3" height="2" fill="#40e040" /><path d="M1061,93 Q1066,89 1069,94" fill="none" stroke="#202020" stroke-width="1.8" stroke-dasharray="1.5 1"/><rect x="1064" y="101" width="10" height="8" fill="#a0a0a0" opacity="0.7"/><rect x="1070" y="94" width="2" height="14" fill="#f0e020" /><rect x="1074" y="95" width="3" height="13" fill="#f06060" /><rect x="1065" y="103" width="3" height="2" fill="#40e040" /><path d="M1093,100 L1091,96 Q1093,94 1095,97 V90 Q1097,88 1099,90 V89 Q1101,87 1103,89 V92 Q1105,90 1107,93 V104 Q1105,109 1099,109 Q1095,107 1093,100Z" fill="#ffffff" stroke="#101010" stroke-width="1.3" /><path d="M1096,106 L1102,101 L1106,104 L1100,109Z" fill="#8eb8e8" /><rect x="1120" y="80" width="211" height="1" fill="#ffffff" /><rect x="1120" y="80" width="1" height="40" fill="#ffffff" /><rect x="1330" y="80" width="1.2" height="40" fill="#9a9a9a" /><rect x="1120" y="119" width="211" height="1.2" fill="#9a9a9a" /><rect x="1124" y="83" width="1" height="34" fill="#ffffff" /><rect x="1125" y="83" width="1.6" height="34" fill="#9a9a9a" /><rect x="1122.5" y="116" width="4" height="1.5" fill="#9a9a9a" /><path d="M1146,88 H1152 V94 H1156 L1149,101 L1142,94 H1146Z" fill="#1040e8" /><circle cx="1149" cy="104.5" r="3" fill="#1040e8"/><path d="M1167,96 Q1172,86 1182,94 L1186,90 L1186,101 L1176,101 L1179,97 Q1174,92 1170,98Z" fill="#1848e8" /><circle cx="1169" cy="101" r="2.8" fill="#1040e8"/><path d="M1204,88 L1211,95 H1207 V100 H1201 V95 H1197Z" fill="#1040e8" /><circle cx="1204" cy="104.5" r="3" fill="#1040e8"/><rect x="1224" y="89" width="1.3" height="1.3" fill="#404040" /><rect x="1224" y="91.6" width="1.3" height="1.3" fill="#404040" /><rect x="1224" y="94.19999999999999" width="1.3" height="1.3" fill="#404040" /><rect x="1224" y="96.79999999999998" width="1.3" height="1.3" fill="#404040" /><rect x="1224" y="99.39999999999998" width="1.3" height="1.3" fill="#404040" /><rect x="1224" y="101.99999999999997" width="1.3" height="1.3" fill="#404040" /><rect x="1224" y="104.59999999999997" width="1.3" height="1.3" fill="#404040" /><rect x="1224" y="107.19999999999996" width="1.3" height="1.3" fill="#404040" /><path d="M1242,88 H1248 V93 H1252 L1245,100 L1238,93 H1242Z" fill="#1040e8" /><circle cx="1245" cy="104.5" r="2.8" fill="#1040e8"/><path d="M1237,101 V107 M1239.5,101 V107 M1250.5,101 V107 M1253,101 V107" fill="none" stroke="#1040e8" stroke-width="0.9" /><path d="M1260,98 H1267 L1263.5,102Z" fill="#000" /><path d="M1275,96 Q1280,86 1290,94 L1294,90 L1294,101 L1284,101 L1287,97 Q1282,92 1278,98Z" fill="#1848e8" /><circle cx="1277" cy="100" r="2.6" fill="#1040e8"/><path d="M1275,103 V107 M1277.5,103 V107 M1280,103 V107 M1282.5,103 V107 M1285,103 V107 M1287.5,103 V107 M1290,103 V107 M1292.5,103 V107" fill="none" stroke="#1040e8" stroke-width="0.8" /><path d="M1312,88 L1319,95 H1315 V100 H1309 V95 H1305Z" fill="#1040e8" /><circle cx="1312" cy="104.5" r="2.8" fill="#1040e8"/><path d="M1304,101 V107 M1306.5,101 V107 M1317.5,101 V107 M1320,101 V107" fill="none" stroke="#1040e8" stroke-width="0.9" /><rect x="1332" y="80" width="193" height="1" fill="#ffffff" /><rect x="1332" y="80" width="1" height="40" fill="#ffffff" /><rect x="1524" y="80" width="1.2" height="40" fill="#9a9a9a" /><rect x="1332" y="119" width="193" height="1.2" fill="#9a9a9a" /><rect x="1336" y="83" width="1" height="34" fill="#ffffff" /><rect x="1337" y="83" width="1.6" height="34" fill="#9a9a9a" /><rect x="1334.5" y="116" width="4" height="1.5" fill="#9a9a9a" /><path d="M1351,98 L1354,91 Q1359,88 1363,91 L1367,89 L1365,96 Q1360,99 1356,96 L1352,99Z" fill="#88c8f8" stroke="#3a9ae8" stroke-width="1.1" /><path d="M1355,94 Q1359,91 1363,93" fill="none" stroke="#c8e8fc" stroke-width="1" /><path d="M1365,88 L1367,88 L1366,101 L1364,101Z" fill="#c89050" stroke="#8a6030" stroke-width="0.6" /><circle cx="1367" cy="103" r="4.3" fill="#40a040"/><path d="M1364.5,103 H1369.5 M1367,100.5 V105.5" fill="none" stroke="#fff" stroke-width="1.4" /><path d="M1376,98 H1383 L1379.5,102Z" fill="#000" /><path d="M1390,98 L1393,91 Q1398,88 1402,91 L1406,89 L1404,96 Q1399,99 1395,96 L1391,99Z" fill="#88c8f8" stroke="#3a9ae8" stroke-width="1.1" /><path d="M1394,94 Q1398,91 1402,93" fill="none" stroke="#c8e8fc" stroke-width="1" /><path d="M1404,88 L1406,88 L1405,101 L1403,101Z" fill="#c89050" stroke="#8a6030" stroke-width="0.6" /><circle cx="1405" cy="103" r="4.3" fill="#e06020"/><path d="M1402.5,103 H1407.5" fill="none" stroke="#fff" stroke-width="1.4" /><path d="M1415,98 H1422 L1418.5,102Z" fill="#000" /><path d="M1429,98 L1432,91 Q1437,88 1441,91 L1445,89 L1443,96 Q1438,99 1434,96 L1430,99Z" fill="#88c8f8" stroke="#3a9ae8" stroke-width="1.1" /><path d="M1433,94 Q1437,91 1441,93" fill="none" stroke="#c8e8fc" stroke-width="1" /><path d="M1443,88 L1445,88 L1444,101 L1442,101Z" fill="#c89050" stroke="#8a6030" stroke-width="0.6" /><path d="M1444,95 L1448,97 L1438,108 L1434,106Z" fill="#e8c040" stroke="#b08030" stroke-width="0.8" /><path d="M1456,98 L1459,91 Q1464,88 1468,91 L1472,89 L1470,96 Q1465,99 1461,96 L1457,99Z" fill="#88c8f8" stroke="#3a9ae8" stroke-width="1.1" /><path d="M1460,94 Q1464,91 1468,93" fill="none" stroke="#c8e8fc" stroke-width="1" /><path d="M1470,88 L1472,88 L1471,101 L1469,101Z" fill="#c89050" stroke="#8a6030" stroke-width="0.6" /><rect x="1463" y="97" width="12" height="11" fill="#4a78d0" /><rect x="1466" y="98" width="6" height="3" fill="#fff" /><rect x="1465" y="104" width="8" height="2" fill="#80e060" /><path d="M1481,98 H1488 L1484.5,102Z" fill="#000" /><path d="M1495,98 L1498,91 Q1503,88 1507,91 L1511,89 L1509,96 Q1504,99 1500,96 L1496,99Z" fill="#88c8f8" stroke="#3a9ae8" stroke-width="1.1" /><path d="M1499,94 Q1503,91 1507,93" fill="none" stroke="#c8e8fc" stroke-width="1" /><path d="M1509,88 L1511,88 L1510,101 L1508,101Z" fill="#c89050" stroke="#8a6030" stroke-width="0.6" /><path d="M1503,100 H1508 V97 L1515,102 L1508,107 V104 H1503Z" fill="#50b050" stroke="#308030" stroke-width="0.8" /><rect x="1526" y="80" width="225" height="1" fill="#ffffff" /><rect x="1526" y="80" width="1" height="40" fill="#ffffff" /><rect x="1750" y="80" width="1.2" height="40" fill="#9a9a9a" /><rect x="1526" y="119" width="225" height="1.2" fill="#9a9a9a" /><rect x="1530" y="83" width="1" height="34" fill="#ffffff" /><rect x="1531" y="83" width="1.6" height="34" fill="#9a9a9a" /><rect x="1528.5" y="116" width="4" height="1.5" fill="#9a9a9a" /><rect x="1545" y="88" width="24" height="24" fill="#ffffff" /><rect x="1545" y="88" width="24" height="1.3" fill="#a0a0a0" /><rect x="1545" y="88" width="1.3" height="24" fill="#a0a0a0" /><path d="M1554,94 L1554,104 L1556.5,101.5 L1559,107 L1561,106 L1558.5,100.5 L1562,100.5Z" fill="#000" stroke="#000" stroke-width="1" /><rect x="1577" y="88" width="25" height="24" fill="#f0f0f0" /><rect x="1577" y="88" width="25" height="1" fill="#ffffff" /><rect x="1577" y="88" width="1" height="24" fill="#ffffff" /><rect x="1600.5" y="88" width="1.8" height="24" fill="#a0a0a0" /><rect x="1577" y="110.5" width="25" height="1.8" fill="#a0a0a0" /><path d="M1583,98 V95 H1590 M1585,97 H1593 V105 H1585Z M1594,103 L1598,107 M1598,104 V107 H1595" fill="none" stroke="#000" stroke-width="1.8" /><rect x="1610" y="88" width="25" height="24" fill="#f0f0f0" /><rect x="1610" y="88" width="25" height="1" fill="#ffffff" /><rect x="1610" y="88" width="1" height="24" fill="#ffffff" /><rect x="1633.5" y="88" width="1.8" height="24" fill="#a0a0a0" /><rect x="1610" y="110.5" width="25" height="1.8" fill="#a0a0a0" /><path d="M1622,92 V108 M1614,100 H1630" fill="none" stroke="#707070" stroke-width="1.2" stroke-dasharray="1.3 1"/><path d="M1619,95 L1622,91.5 L1625,95 M1619,105 L1622,108.5 L1625,105 M1617,97 L1613.5,100 L1617,103 M1627,97 L1630.5,100 L1627,103 M1620,98 L1622,96 L1624,98 L1624,102 L1622,104 L1620,102Z" fill="none" stroke="#505050" stroke-width="1.2" /><rect x="1642" y="88" width="25" height="24" fill="#f0f0f0" /><rect x="1642" y="88" width="25" height="1" fill="#ffffff" /><rect x="1642" y="88" width="1" height="24" fill="#ffffff" /><rect x="1665.5" y="88" width="1.8" height="24" fill="#a0a0a0" /><rect x="1642" y="110.5" width="25" height="1.8" fill="#a0a0a0" /><path d="M1651,91 V105 M1660,91 V105" fill="none" stroke="#303030" stroke-width="1.5" /><rect x="1648" y="105" width="6" height="3" fill="none" stroke="#303030" stroke-width="1.2"/><rect x="1657" y="105" width="6" height="3" fill="none" stroke="#303030" stroke-width="1.2"/><rect x="1675" y="88" width="25" height="24" fill="#f0f0f0" /><rect x="1675" y="88" width="25" height="1" fill="#ffffff" /><rect x="1675" y="88" width="1" height="24" fill="#ffffff" /><rect x="1698.5" y="88" width="1.8" height="24" fill="#a0a0a0" /><rect x="1675" y="110.5" width="25" height="1.8" fill="#a0a0a0" /><path d="M1680,97 H1686 M1680,102 H1686 M1686,94 H1691 V108 H1697" fill="none" stroke="#202020" stroke-width="1.3" /><rect x="1692" y="92" width="1.3" height="1.3" fill="#303030" /><rect x="1692" y="94.6" width="1.3" height="1.3" fill="#303030" /><rect x="1692" y="97.19999999999999" width="1.3" height="1.3" fill="#303030" /><rect x="1692" y="99.79999999999998" width="1.3" height="1.3" fill="#303030" /><rect x="1692" y="102.39999999999998" width="1.3" height="1.3" fill="#303030" /><rect x="1692" y="104.99999999999997" width="1.3" height="1.3" fill="#303030" /><rect x="1692" y="107.59999999999997" width="1.3" height="1.3" fill="#303030" /><rect x="1710" y="91" width="1.3" height="1.3" fill="#404040" /><rect x="1710" y="93.6" width="1.3" height="1.3" fill="#404040" /><rect x="1710" y="96.19999999999999" width="1.3" height="1.3" fill="#404040" /><rect x="1710" y="98.79999999999998" width="1.3" height="1.3" fill="#404040" /><rect x="1710" y="101.39999999999998" width="1.3" height="1.3" fill="#404040" /><rect x="1710" y="103.99999999999997" width="1.3" height="1.3" fill="#404040" /><rect x="1710" y="106.59999999999997" width="1.3" height="1.3" fill="#404040" /><rect x="1721" y="90" width="10" height="20" fill="#000" /><circle cx="1726" cy="94" r="2.8" fill="#f00000"/><circle cx="1726" cy="100" r="2.4" fill="#e0e000"/><circle cx="1726" cy="106" r="2.4" fill="#20e020"/><path d="M1734,95 L1740,100 L1734,105Z" fill="#fff" stroke="#000" stroke-width="1.1" /><rect x="3" y="120" width="243" height="1" fill="#ffffff" /><rect x="3" y="120" width="1" height="40" fill="#ffffff" /><rect x="245" y="120" width="1.2" height="40" fill="#9a9a9a" /><rect x="3" y="159" width="243" height="1.2" fill="#9a9a9a" /><rect x="7" y="123" width="1" height="34" fill="#ffffff" /><rect x="8" y="123" width="1.6" height="34" fill="#9a9a9a" /><rect x="5.5" y="156" width="4" height="1.5" fill="#9a9a9a" /><rect x="30" y="129" width="3.5" height="13" fill="#f0d000" stroke="#303000" stroke-width="0.6"/><rect x="23" y="141" width="16" height="5" fill="#f0d800" stroke="#303000" stroke-width="1"/><path d="M33,134 H41 M37,130 V138" fill="none" stroke="#303000" stroke-width="2.2" /><path d="M33,134 H41 M37,130 V138" fill="none" stroke="#f0d000" stroke-width="1" /><rect x="57" y="128" width="1.3" height="1.3" fill="#e8d040" /><rect x="57" y="130.6" width="1.3" height="1.3" fill="#e8d040" /><rect x="57" y="133.2" width="1.3" height="1.3" fill="#e8d040" /><rect x="57" y="135.79999999999998" width="1.3" height="1.3" fill="#e8d040" /><rect x="57" y="138.39999999999998" width="1.3" height="1.3" fill="#e8d040" /><rect x="57" y="140.99999999999997" width="1.3" height="1.3" fill="#e8d040" /><rect x="50" y="143" width="1.3" height="1.3" fill="#c8b030" /><rect x="52.6" y="143" width="1.3" height="1.3" fill="#c8b030" /><rect x="55.2" y="143" width="1.3" height="1.3" fill="#c8b030" /><rect x="57.800000000000004" y="143" width="1.3" height="1.3" fill="#c8b030" /><rect x="60.400000000000006" y="143" width="1.3" height="1.3" fill="#c8b030" /><rect x="63.00000000000001" y="143" width="1.3" height="1.3" fill="#c8b030" /><rect x="65.60000000000001" y="143" width="1.3" height="1.3" fill="#c8b030" /><rect x="51" y="146" width="1.3" height="1.3" fill="#909090" /><rect x="53.6" y="146" width="1.3" height="1.3" fill="#909090" /><rect x="56.2" y="146" width="1.3" height="1.3" fill="#909090" /><rect x="58.800000000000004" y="146" width="1.3" height="1.3" fill="#909090" /><rect x="61.400000000000006" y="146" width="1.3" height="1.3" fill="#909090" /><rect x="64.0" y="146" width="1.3" height="1.3" fill="#909090" /><rect x="60" y="132" width="1.3" height="1.3" fill="#a0a060" /><rect x="62.6" y="132" width="1.3" height="1.3" fill="#a0a060" /><rect x="65.2" y="132" width="1.3" height="1.3" fill="#a0a060" /><rect x="67.8" y="132" width="1.3" height="1.3" fill="#a0a060" /><path d="M77.5,129.5 H84.5 V145.5 H97.5" fill="none" stroke="#209040" stroke-width="1.6" /><path d="M86,136 L91,131 V134 H97 V138 H91 V141Z" fill="#3010d8" /><path d="M105.5,145.5 H118.5 V129.5 H125" fill="none" stroke="#209040" stroke-width="1.6" /><path d="M117,136 L112,131 V134 H105 V138 H112 V141Z" fill="#3010d8" /><path d="M132,129.5 H139.5 V145.5 H152.5" fill="none" stroke="#30a050" stroke-width="1.3" stroke-dasharray="1.4 1.2"/><path d="M143,137.5 L145.5,140 L143,142.5 L140.5,140Z" fill="#c8a8f8" stroke="#7040e0" stroke-width="1" /><path d="M137,134 L139.5,137 L142,134" fill="none" stroke="#7040e0" stroke-width="1.3" /><path d="M160,129.5 H170.5 V145.5 H180" fill="none" stroke="#30a050" stroke-width="1.3" stroke-dasharray="1.4 1.2"/><path d="M170,133.0 L172.5,135.5 L170,138.0 L167.5,135.5Z" fill="#c8a8f8" stroke="#7040e0" stroke-width="1" /><path d="M166,138.5 L168.5,141 L166,143.5 L163.5,141Z" fill="#c8a8f8" stroke="#7040e0" stroke-width="1" /><path d="M188,145.5 H195.5 V129.5 H206" fill="none" stroke="#30a050" stroke-width="1.3" stroke-dasharray="1.4 1.2"/><path d="M195.5,133.0 L198.0,135.5 L195.5,138.0 L193.0,135.5Z" fill="#c8a8f8" stroke="#7040e0" stroke-width="1" /><path d="M199,138.5 L201.5,141 L199,143.5 L196.5,141Z" fill="#c8a8f8" stroke="#7040e0" stroke-width="1" /><path d="M216,145.5 H227.5 V129.5 H234" fill="none" stroke="#30a050" stroke-width="1.3" stroke-dasharray="1.4 1.2"/><path d="M227.5,133.0 L230.0,135.5 L227.5,138.0 L225.0,135.5Z" fill="#c8a8f8" stroke="#7040e0" stroke-width="1" /><path d="M224,138.5 L226.5,141 L224,143.5 L221.5,141Z" fill="#c8a8f8" stroke="#7040e0" stroke-width="1" /><rect x="247" y="120" width="457" height="1" fill="#ffffff" /><rect x="247" y="120" width="1" height="40" fill="#ffffff" /><rect x="703" y="120" width="1.2" height="40" fill="#9a9a9a" /><rect x="247" y="159" width="457" height="1.2" fill="#9a9a9a" /><rect x="251" y="123" width="1" height="34" fill="#ffffff" /><rect x="252" y="123" width="1.6" height="34" fill="#9a9a9a" /><rect x="249.5" y="156" width="4" height="1.5" fill="#9a9a9a" /><path d="M264,130 L271,136 L264,142 M266,136 H271" fill="none" stroke="#202020" stroke-width="1.3" stroke-dasharray="1.5 1"/><path d="M272,136 L277,132 V134.5 L280,132 V134.5 H285 V137.5 H280 V140 L277,137.5 V140Z" fill="#4a90f8" /><path d="M289,137 L291.5,139.5 L294,137" fill="none" stroke="#202020" stroke-width="1.2" /><path d="M314,136 L309,132 V134.5 L306,132 V134.5 H301 V137.5 H306 V140 L309,137.5 V140Z" fill="#4a90f8" /><path d="M322,130 L315,136 L322,142 M320,136 H315" fill="none" stroke="#202020" stroke-width="1.3" stroke-dasharray="1.5 1"/><path d="M328,137 L330.5,139.5 L333,137" fill="none" stroke="#202020" stroke-width="1.2" /><rect x="341" y="130" width="1.3" height="1.3" fill="#303030" /><rect x="343.6" y="130" width="1.3" height="1.3" fill="#303030" /><rect x="346.20000000000005" y="130" width="1.3" height="1.3" fill="#303030" /><rect x="341" y="141" width="1.3" height="1.3" fill="#303030" /><rect x="343.6" y="141" width="1.3" height="1.3" fill="#303030" /><rect x="346.20000000000005" y="141" width="1.3" height="1.3" fill="#303030" /><rect x="341" y="144" width="1.3" height="1.3" fill="#303030" /><rect x="343.6" y="144" width="1.3" height="1.3" fill="#303030" /><rect x="346.20000000000005" y="144" width="1.3" height="1.3" fill="#303030" /><path d="M351,130 L357,136 L351,142 L345,136Z" fill="#70d070" stroke="#206020" stroke-width="1.2" /><path d="M347,136 H355 M351,132 V140" fill="none" stroke="#206020" stroke-width="1" /><path d="M359,134 L361,136 L359,138 L357,136Z" fill="#6080f0" /><rect x="372" y="129" width="1.3" height="1.3" fill="#404040" /><rect x="372" y="131.6" width="1.3" height="1.3" fill="#404040" /><rect x="372" y="134.2" width="1.3" height="1.3" fill="#404040" /><rect x="372" y="136.79999999999998" width="1.3" height="1.3" fill="#404040" /><rect x="372" y="139.39999999999998" width="1.3" height="1.3" fill="#404040" /><rect x="372" y="141.99999999999997" width="1.3" height="1.3" fill="#404040" /><rect x="372" y="144.59999999999997" width="1.3" height="1.3" fill="#404040" /><rect x="372" y="147.19999999999996" width="1.3" height="1.3" fill="#404040" /><text x="387" y="143" font-family="Liberation Sans" font-size="14" fill="#8c8c8c">Search:</text><rect x="440" y="128" width="145" height="22" fill="#f0f0f0" /><rect x="440" y="128" width="145" height="1.2" fill="#a0a0a0" /><rect x="440" y="128" width="1.2" height="22" fill="#a0a0a0" /><rect x="440" y="149" width="145" height="1" fill="#ffffff" /><rect x="587" y="128" width="22" height="22" fill="#f0f0f0" /><rect x="587" y="128" width="22" height="1" fill="#ffffff" /><rect x="587" y="128" width="1" height="22" fill="#ffffff" /><rect x="607.5" y="128" width="1.8" height="22" fill="#a0a0a0" /><rect x="587" y="148.5" width="22" height="1.8" fill="#a0a0a0" /><path d="M593,135 L598,141 L603,135 M595,135 L598,138 L601,135" fill="none" stroke="#303030" stroke-width="1.4" /><defs><pattern id="chk" width="2" height="2" patternUnits="userSpaceOnUse"><rect width="1" height="1" fill="#808080"/><rect x="1" y="1" width="1" height="1" fill="#909090"/><rect x="1" y="0" width="1" height="1" fill="#d0d0d0"/><rect x="0" y="1" width="1" height="1" fill="#c8c8c8"/></pattern></defs><path d="M618,143 V135 L620,130 V128 H624 V131 L625,134 H627 L628,131 V128 H632 V130 L634,135 V143 H628 V138 H624 V143Z" fill="url(#chk)" /><path d="M643,143 V135 L645,130 V128 H649 V131 L650,134 H652 L653,131 V128 H657 V130 L659,135 V143 H653 V138 H649 V143Z" fill="url(#chk)" /><path d="M672,143 V135 L674,130 V128 H678 V131 L679,134 H681 L682,131 V128 H686 V130 L688,135 V143 H682 V138 H678 V143Z" fill="url(#chk)" /><path d="M614,146 L617,143 V145 H621 V147 H617 V149Z M622,146 L619,143" fill="#4a60f0" /><path d="M613,146 H623" fill="none" stroke="#4a60f0" stroke-width="1.6" stroke-dasharray="1.5 0.8"/><path d="M652,146 H662" fill="none" stroke="#4a60f0" stroke-width="1.6" stroke-dasharray="1.5 0.8"/><path d="M662,146 L659,143 V149Z" fill="#4a60f0" /><path d="M679,148 L690,137" fill="none" stroke="#b8d0f8" stroke-width="3.2" /><rect x="705" y="120" width="187" height="1" fill="#ffffff" /><rect x="705" y="120" width="1" height="40" fill="#ffffff" /><rect x="891" y="120" width="1.2" height="40" fill="#9a9a9a" /><rect x="705" y="159" width="187" height="1.2" fill="#9a9a9a" /><rect x="709" y="123" width="1" height="34" fill="#ffffff" /><rect x="710" y="123" width="1.6" height="34" fill="#9a9a9a" /><rect x="707.5" y="156" width="4" height="1.5" fill="#9a9a9a" /><circle cx="732" cy="135" r="5.5" fill="#ffffff" stroke="#101010" stroke-width="2"/><path d="M736,139 L742,145" fill="none" stroke="#2828c8" stroke-width="3" /><path d="M729,135 H735 M732,132 V138" fill="none" stroke="#000" stroke-width="1.8" /><circle cx="759" cy="135" r="5.5" fill="#ffffff" stroke="#101010" stroke-width="2"/><path d="M763,139 L769,145" fill="none" stroke="#2828c8" stroke-width="3" /><path d="M756,135 H762" fill="none" stroke="#000" stroke-width="1.8" /><circle cx="786" cy="135" r="5.5" fill="#0a3a78" stroke="#101010" stroke-width="2"/><path d="M790,139 L796,145" fill="none" stroke="#2828c8" stroke-width="3" /><rect x="810" y="130" width="3" height="11" fill="#f0c000" /><rect x="807" y="140" width="13" height="5" fill="none" stroke="#d8a800" stroke-width="2"/><circle cx="819" cy="131" r="3.5" fill="#b0b0b0" stroke="#303030" stroke-width="1"/><path d="M821,134 L825,139" fill="none" stroke="#2050f0" stroke-width="1.8" /><rect x="837" y="133" width="2.5" height="7" fill="#f0c000" /><rect x="833" y="140" width="8" height="5" fill="none" stroke="#d8a800" stroke-width="2"/><rect x="840" y="140" width="8" height="5" fill="none" stroke="#d8a800" stroke-width="2"/><circle cx="845" cy="131" r="3.5" fill="#b0b0b0" stroke="#303030" stroke-width="1"/><path d="M847,134 L851,139" fill="none" stroke="#2050f0" stroke-width="1.8" /><path d="M862,130 H872 M862,130 V142 H874" fill="none" stroke="#3030c0" stroke-width="1.2" stroke-dasharray="1.3 1"/><path d="M870,135 L875,140 L872,143 L867,138Z" fill="#c0c0c0" stroke="#404040" stroke-width="1" /><path d="M874,142 L880,148" fill="none" stroke="#2050f0" stroke-width="2" /><rect x="893" y="120" width="242" height="1" fill="#ffffff" /><rect x="893" y="120" width="1" height="40" fill="#ffffff" /><rect x="1134" y="120" width="1.2" height="40" fill="#9a9a9a" /><rect x="893" y="159" width="242" height="1.2" fill="#9a9a9a" /><rect x="897" y="123" width="1" height="34" fill="#ffffff" /><rect x="898" y="123" width="1.6" height="34" fill="#9a9a9a" /><rect x="895.5" y="156" width="4" height="1.5" fill="#9a9a9a" /><rect x="911" y="128" width="24" height="24" fill="#ffffff" /><rect x="911" y="128" width="24" height="1.2" fill="#a0a0a0" /><rect x="911" y="128" width="1.2" height="24" fill="#a0a0a0" /><path d="M915,147.5 H931 M923,133 V147" fill="none" stroke="#208030" stroke-width="1.5" /><rect x="944" y="128" width="25" height="24" fill="#f0f0f0" /><rect x="944" y="128" width="25" height="1" fill="#ffffff" /><rect x="944" y="128" width="1" height="24" fill="#ffffff" /><rect x="967.5" y="128" width="1.8" height="24" fill="#a0a0a0" /><rect x="944" y="150.5" width="25" height="1.8" fill="#a0a0a0" /><rect x="952" y="133" width="8" height="14" fill="#2030a0" /><path d="M946,146.5 H952 V133 H960 V146.5 H966" fill="none" stroke="#30a040" stroke-width="1.3" /><rect x="976" y="128" width="25" height="24" fill="#f0f0f0" /><rect x="976" y="128" width="25" height="1" fill="#ffffff" /><rect x="976" y="128" width="1" height="24" fill="#ffffff" /><rect x="999.5" y="128" width="1.8" height="24" fill="#a0a0a0" /><rect x="976" y="150.5" width="25" height="1.8" fill="#a0a0a0" /><rect x="979" y="132" width="19" height="15" fill="#086a18" /><path d="M979,146.5 V133 H984 V146.5 H989 V133 H994 V146.5" fill="none" stroke="#40c050" stroke-width="1.1" /><rect x="1012" y="129" width="1.3" height="1.3" fill="#404040" /><rect x="1012" y="131.6" width="1.3" height="1.3" fill="#404040" /><rect x="1012" y="134.2" width="1.3" height="1.3" fill="#404040" /><rect x="1012" y="136.79999999999998" width="1.3" height="1.3" fill="#404040" /><rect x="1012" y="139.39999999999998" width="1.3" height="1.3" fill="#404040" /><rect x="1012" y="141.99999999999997" width="1.3" height="1.3" fill="#404040" /><rect x="1012" y="144.59999999999997" width="1.3" height="1.3" fill="#404040" /><rect x="1012" y="147.19999999999996" width="1.3" height="1.3" fill="#404040" /><rect x="1012" y="149.79999999999995" width="1.3" height="1.3" fill="#404040" /><rect x="1022" y="130" width="20" height="17" fill="#5a68b8" /><rect x="1022" y="130" width="1" height="17" fill="#8088c8" /><rect x="1024" y="130" width="1" height="17" fill="#8088c8" /><rect x="1026" y="130" width="1" height="17" fill="#8088c8" /><rect x="1028" y="130" width="1" height="17" fill="#8088c8" /><rect x="1030" y="130" width="1" height="17" fill="#8088c8" /><rect x="1032" y="130" width="1" height="17" fill="#8088c8" /><rect x="1034" y="130" width="1" height="17" fill="#8088c8" /><rect x="1036" y="130" width="1" height="17" fill="#8088c8" /><rect x="1038" y="130" width="1" height="17" fill="#8088c8" /><rect x="1040" y="130" width="1" height="17" fill="#8088c8" /><rect x="1034" y="131" width="1.3" height="15" fill="#40c040" /><rect x="1051" y="146.5" width="1.3" height="1.3" fill="#30a040" /><rect x="1053.6" y="146.5" width="1.3" height="1.3" fill="#30a040" /><rect x="1055" y="130" width="5" height="17" fill="#5a68b8" /><rect x="1059" y="130" width="1.3" height="1.3" fill="#30a040" /><rect x="1061.6" y="130" width="1.3" height="1.3" fill="#30a040" /><rect x="1064.1999999999998" y="130" width="1.3" height="1.3" fill="#30a040" /><rect x="1066.7999999999997" y="130" width="1.3" height="1.3" fill="#30a040" /><rect x="1057" y="131" width="1.3" height="1.3" fill="#e0e040" /><rect x="1057" y="133.6" width="1.3" height="1.3" fill="#e0e040" /><rect x="1057" y="136.2" width="1.3" height="1.3" fill="#e0e040" /><rect x="1057" y="138.79999999999998" width="1.3" height="1.3" fill="#e0e040" /><rect x="1057" y="141.39999999999998" width="1.3" height="1.3" fill="#e0e040" /><rect x="1057" y="143.99999999999997" width="1.3" height="1.3" fill="#e0e040" /><rect x="1078" y="146.5" width="1.3" height="1.3" fill="#30a040" /><rect x="1080.6" y="146.5" width="1.3" height="1.3" fill="#30a040" /><rect x="1083.1999999999998" y="146.5" width="1.3" height="1.3" fill="#30a040" /><rect x="1085.7999999999997" y="146.5" width="1.3" height="1.3" fill="#30a040" /><rect x="1086" y="130" width="1.3" height="1.3" fill="#30a040" /><rect x="1086" y="132.6" width="1.3" height="1.3" fill="#30a040" /><rect x="1086" y="135.2" width="1.3" height="1.3" fill="#30a040" /><rect x="1086" y="137.79999999999998" width="1.3" height="1.3" fill="#30a040" /><rect x="1086" y="140.39999999999998" width="1.3" height="1.3" fill="#30a040" /><rect x="1086" y="142.99999999999997" width="1.3" height="1.3" fill="#30a040" /><rect x="1086" y="145.59999999999997" width="1.3" height="1.3" fill="#30a040" /><rect x="1086" y="130" width="1.3" height="1.3" fill="#30a040" /><rect x="1088.6" y="130" width="1.3" height="1.3" fill="#30a040" /><rect x="1091.1999999999998" y="130" width="1.3" height="1.3" fill="#30a040" /><rect x="1093.7999999999997" y="130" width="1.3" height="1.3" fill="#30a040" /><rect x="1106" y="146.5" width="1.3" height="1.3" fill="#30a040" /><rect x="1108.6" y="146.5" width="1.3" height="1.3" fill="#30a040" /><rect x="1111.1999999999998" y="146.5" width="1.3" height="1.3" fill="#30a040" /><rect x="1114" y="130" width="1.3" height="1.3" fill="#e0e040" /><rect x="1114" y="132.6" width="1.3" height="1.3" fill="#e0e040" /><rect x="1114" y="135.2" width="1.3" height="1.3" fill="#e0e040" /><rect x="1114" y="137.79999999999998" width="1.3" height="1.3" fill="#e0e040" /><rect x="1114" y="140.39999999999998" width="1.3" height="1.3" fill="#e0e040" /><rect x="1114" y="142.99999999999997" width="1.3" height="1.3" fill="#e0e040" /><rect x="1114" y="145.59999999999997" width="1.3" height="1.3" fill="#e0e040" /><rect x="1114" y="130" width="1.3" height="1.3" fill="#30a040" /><rect x="1116.6" y="130" width="1.3" height="1.3" fill="#30a040" /><rect x="1119.1999999999998" y="130" width="1.3" height="1.3" fill="#30a040" /><rect x="1121.7999999999997" y="130" width="1.3" height="1.3" fill="#30a040" /></svg>
<div style="position:absolute;left:2px;top:160.6px;width:1914px;height:2.6px;background:#ffffff"></div>
<svg style="left:3px;top:5px" width="20" height="20" viewBox="0 0 20 20"><rect x="0.5" y="0.5" width="18" height="18" fill="#b8b8b8" stroke="#404040" stroke-width="1"/><rect x="1" y="1" width="17" height="3.5" fill="#e8e8e8"/><rect x="2" y="5" width="15" height="12" fill="#000"/><path d="M2.5,9 H5 V7 H8 V12 H11 V9 H16" fill="none" stroke="#00d000" stroke-width="1.2"/><path d="M2.5,14 H5 V12 M11,15 H16" fill="none" stroke="#00d000" stroke-width="1.2"/><path d="M8.5,6 V16.5" stroke="#20d0d0" stroke-width="1.3"/><path d="M11,16 H16.5" stroke="#4020e0" stroke-width="1.3"/><rect x="18" y="2" width="1.5" height="17" fill="#303030"/><rect x="2" y="18" width="17" height="1.5" fill="#303030"/></svg>
<div style="position:absolute;left:28px;top:8px;font-size:14px;color:#000;white-space:nowrap;line-height:1;">Wave</div>
<svg style="left:1760px;top:5px" width="140" height="20" viewBox="1760 5 140 20"><rect x="1765" y="13" width="12" height="1.1" fill="#111"/><rect x="1823.6" y="10.6" width="9.3" height="9.3" rx="1.5" fill="none" stroke="#111" stroke-width="1.1"/><path d="M1826,8.6 H1833 Q1835,8.6 1835,10.6 V17.5" fill="none" stroke="#111" stroke-width="1.1"/><path d="M1882,8 L1894,20 M1894,8 L1882,20" stroke="#111" stroke-width="1.1"/></svg>
<div style="position:absolute;left:9px;top:35px;font-size:14.6px;color:#111;white-space:nowrap;line-height:1;">File</div>
<div style="position:absolute;left:49px;top:35px;font-size:14.6px;color:#111;white-space:nowrap;line-height:1;">Edit</div>
<div style="position:absolute;left:91px;top:35px;font-size:14.6px;color:#111;white-space:nowrap;line-height:1;">View</div>
<div style="position:absolute;left:140px;top:35px;font-size:14.6px;color:#111;white-space:nowrap;line-height:1;">Add</div>
<div style="position:absolute;left:185px;top:35px;font-size:14.6px;color:#111;white-space:nowrap;line-height:1;">Format</div>
<div style="position:absolute;left:250px;top:35px;font-size:14.6px;color:#111;white-space:nowrap;line-height:1;">Tools</div>
<div style="position:absolute;left:301px;top:35px;font-size:14.6px;color:#111;white-space:nowrap;line-height:1;">Bookmarks</div>
<div style="position:absolute;left:392px;top:35px;font-size:14.6px;color:#111;white-space:nowrap;line-height:1;">Window</div>
<div style="position:absolute;left:465px;top:35px;font-size:14.6px;color:#111;white-space:nowrap;line-height:1;">Help</div>
<svg style="left:5px;top:58px" width="20" height="20" viewBox="0 0 20 20"><rect x="0.5" y="0.5" width="18" height="18" fill="#b8b8b8" stroke="#404040" stroke-width="1"/><rect x="1" y="1" width="17" height="3.5" fill="#e8e8e8"/><rect x="2" y="5" width="15" height="12" fill="#000"/><path d="M2.5,9 H5 V7 H8 V12 H11 V9 H16" fill="none" stroke="#00d000" stroke-width="1.2"/><path d="M2.5,14 H5 V12 M11,15 H16" fill="none" stroke="#00d000" stroke-width="1.2"/><path d="M8.5,6 V16.5" stroke="#20d0d0" stroke-width="1.3"/><path d="M11,16 H16.5" stroke="#4020e0" stroke-width="1.3"/><rect x="18" y="2" width="1.5" height="17" fill="#303030"/><rect x="2" y="18" width="17" height="1.5" fill="#303030"/></svg>
<div style="position:absolute;left:28px;top:61px;font-size:14.5px;color:#1c1c40;white-space:nowrap;line-height:1;letter-spacing:-0.3px">Wave - Default</div>
<svg style="left:0;top:0" width="1920" height="100" viewBox="0 0 1920 100"><rect x="127" y="62.6" width="851" height="1.6" fill="#d0f4fc"/><rect x="127" y="64.6" width="851" height="2.2" fill="#2a3440"/><rect x="127" y="69" width="851" height="1.6" fill="#d0f4fc"/><rect x="127" y="71" width="851" height="2.2" fill="#2a3440"/><rect x="1002" y="62.6" width="850" height="1.6" fill="#d0f4fc"/><rect x="1002" y="64.6" width="850" height="2.2" fill="#2a3440"/><rect x="1002" y="69" width="850" height="1.6" fill="#d0f4fc"/><rect x="1002" y="71" width="850" height="2.2" fill="#2a3440"/><rect x="980.0" y="63.0" width="1.3" height="1.3" fill="#ffffff"/><rect x="980.8" y="63.8" width="1.6" height="1.6" fill="#101010"/><rect x="983.9" y="63.0" width="1.3" height="1.3" fill="#ffffff"/><rect x="984.7" y="63.8" width="1.6" height="1.6" fill="#101010"/><rect x="987.8" y="63.0" width="1.3" height="1.3" fill="#ffffff"/><rect x="988.6" y="63.8" width="1.6" height="1.6" fill="#101010"/><rect x="991.7" y="63.0" width="1.3" height="1.3" fill="#ffffff"/><rect x="992.5" y="63.8" width="1.6" height="1.6" fill="#101010"/><rect x="995.6" y="63.0" width="1.3" height="1.3" fill="#ffffff"/><rect x="996.4" y="63.8" width="1.6" height="1.6" fill="#101010"/><rect x="999.5" y="63.0" width="1.3" height="1.3" fill="#ffffff"/><rect x="1000.3" y="63.8" width="1.6" height="1.6" fill="#101010"/><rect x="981.2" y="66.8" width="1.3" height="1.3" fill="#ffffff"/><rect x="982.0" y="67.6" width="1.6" height="1.6" fill="#101010"/><rect x="985.1" y="66.8" width="1.3" height="1.3" fill="#ffffff"/><rect x="985.9" y="67.6" width="1.6" height="1.6" fill="#101010"/><rect x="989.0" y="66.8" width="1.3" height="1.3" fill="#ffffff"/><rect x="989.8" y="67.6" width="1.6" height="1.6" fill="#101010"/><rect x="992.9" y="66.8" width="1.3" height="1.3" fill="#ffffff"/><rect x="993.7" y="67.6" width="1.6" height="1.6" fill="#101010"/><rect x="996.8" y="66.8" width="1.3" height="1.3" fill="#ffffff"/><rect x="997.6" y="67.6" width="1.6" height="1.6" fill="#101010"/><rect x="1000.7" y="66.8" width="1.3" height="1.3" fill="#ffffff"/><rect x="1001.5" y="67.6" width="1.6" height="1.6" fill="#101010"/><rect x="980.0" y="70.6" width="1.3" height="1.3" fill="#ffffff"/><rect x="980.8" y="71.4" width="1.6" height="1.6" fill="#101010"/><rect x="983.9" y="70.6" width="1.3" height="1.3" fill="#ffffff"/><rect x="984.7" y="71.4" width="1.6" height="1.6" fill="#101010"/><rect x="987.8" y="70.6" width="1.3" height="1.3" fill="#ffffff"/><rect x="988.6" y="71.4" width="1.6" height="1.6" fill="#101010"/><rect x="991.7" y="70.6" width="1.3" height="1.3" fill="#ffffff"/><rect x="992.5" y="71.4" width="1.6" height="1.6" fill="#101010"/><rect x="995.6" y="70.6" width="1.3" height="1.3" fill="#ffffff"/><rect x="996.4" y="71.4" width="1.6" height="1.6" fill="#101010"/><rect x="999.5" y="70.6" width="1.3" height="1.3" fill="#ffffff"/><rect x="1000.3" y="71.4" width="1.6" height="1.6" fill="#101010"/><rect x="1857" y="59" width="15" height="16" fill="#f0f0f0"/><rect x="1871" y="59" width="1.5" height="16" fill="#808080"/><rect x="1857" y="74" width="15.5" height="1.5" fill="#808080"/><rect x="1877" y="59" width="15" height="16" fill="#f0f0f0"/><rect x="1891" y="59" width="1.5" height="16" fill="#808080"/><rect x="1877" y="74" width="15.5" height="1.5" fill="#808080"/><rect x="1897" y="59" width="15" height="16" fill="#f0f0f0"/><rect x="1911" y="59" width="1.5" height="16" fill="#808080"/><rect x="1897" y="74" width="15.5" height="1.5" fill="#808080"/><path d="M1865,62 V72 M1860,67 H1870" stroke="#303030" stroke-width="1" stroke-dasharray="1 1"/><path d="M1880,66 V72 H1886 M1882,70 L1889,63" fill="none" stroke="#000" stroke-width="2"/><path d="M1884,70 L1882,70 L1882,68" fill="none" stroke="#000" stroke-width="2"/><path d="M1901,63 L1910,72 M1910,63 L1901,72" stroke="#000" stroke-width="2.2"/></svg>
<div style="position:absolute;left:0px;top:1019px;width:1920px;height:61px;background:linear-gradient(90deg,#2c1f1a 0%,#361f18 8%,#3c1d15 15.6%,#381c17 20.8%,#261e2c 23.4%,#1c2036 25.5%,#1a2038 47%,#201e3a 53%,#231d3a 57%,#1c2038 68%,#24202c 75%,#381f1a 78%,#3a1e16 83%,#342012 90%,#2e1e12 100%)"></div>
<svg style="left:0;top:0" width="1920" height="1080" viewBox="0 0 1920 1080" font-family="Liberation Sans"><defs><linearGradient id="cl" x1="0" y1="0" x2="0" y2="1"><stop offset="0" stop-color="#a8d0f8"/><stop offset="1" stop-color="#5a9ae8"/></linearGradient><linearGradient id="wl" x1="0" y1="0" x2="1" y2="1"><stop offset="0" stop-color="#86dcfc"/><stop offset="1" stop-color="#1a90f0"/></linearGradient><linearGradient id="mb" x1="0" y1="0" x2="1" y2="1"><stop offset="0" stop-color="#2a60f8"/><stop offset="1" stop-color="#7a30e8"/></linearGradient></defs><path d="M27,1045 Q30,1036 38,1034 Q34,1040 38,1046Z" fill="#f0a020"/><path d="M29,1063 Q24,1062 25,1056 Q26,1050 33,1050 Q36,1043 44,1045 Q50,1046 51,1052 Q56,1053 55,1058 Q54,1063 50,1063Z" fill="url(#cl)"/><circle cx="48.5" cy="1038.5" r="9.5" fill="#f4a0b0"/><text x="48.5" y="1044" font-size="13" fill="#202020" text-anchor="middle">1</text><text x="64" y="1045" font-size="15.5" fill="#ffffff">26°C</text><text x="64" y="1065" font-size="15.5" fill="#dcdcdc">Mostly cloudy</text><rect x="475" y="1036" width="13.8" height="13.8" rx="1" fill="url(#wl)"/><rect x="490.5" y="1036" width="13.8" height="13.8" rx="1" fill="url(#wl)"/><rect x="475" y="1051.5" width="13.8" height="13.8" rx="1" fill="url(#wl)"/><rect x="490.5" y="1051.5" width="13.8" height="13.8" rx="1" fill="url(#wl)"/><rect x="521.5" y="1030.5" width="275" height="40" rx="20" fill="#364058" stroke="#4a5470" stroke-width="1"/><circle cx="544.5" cy="1049" r="7" fill="none" stroke="#e8e8e8" stroke-width="2.2"/><path d="M549.5,1054 L554,1058.5" stroke="#e8e8e8" stroke-width="2.4" stroke-linecap="round"/><text x="567" y="1056.5" font-size="16.6" fill="#e4e4e4">Search</text><path d="M733,1040 Q738,1033 746,1038 Q754,1046 760,1061 Q748,1058 740,1050 Q730,1045 733,1040Z" fill="#30c090"/><ellipse cx="740" cy="1043" rx="6" ry="5" fill="#a0b020"/><circle cx="741" cy="1044" r="3" fill="#1050d0"/><path d="M763,1051 H788 Q786,1064 775,1064 Q765,1064 763,1051Z" fill="#d89a50"/><ellipse cx="775.5" cy="1051" rx="12.5" ry="3" fill="#f4e8d0"/><path d="M775,1038 Q779,1044 775,1049 Q771,1044 775,1038Z" fill="#f8a020"/><rect x="811" y="1044" width="23" height="20" rx="2" fill="#6a6a6a"/><rect x="819" y="1036" width="22" height="20" rx="2" fill="#f0f0f0"/><rect x="819" y="1044" width="15" height="12" fill="#b8b8b8"/><path d="M866,1040 Q866,1037 869,1037 H876 L879,1040 H893 Q896,1040 896,1043 V1064 H866Z" fill="#f0c030"/><rect x="866" y="1043" width="30" height="21" rx="1" fill="#fcd660"/><rect x="872" y="1055" width="18" height="9" rx="1.5" fill="#1a78d8"/><rect x="875" y="1057" width="12" height="2" fill="#88c8f8"/><rect x="877" y="1071" width="8" height="3.2" rx="1.6" fill="#9aa0ac"/><circle cx="936" cy="1050" r="15" fill="#1a78d0"/><path d="M922,1048 Q925,1035 938,1035 Q951,1035 951,1050 Q950,1058 941,1058 Q934,1058 934,1053 Q934,1048 942,1048 Q932,1041 922,1048Z" fill="#50c878"/><path d="M936,1063 Q925,1062 924,1052 Q930,1060 940,1058" fill="#0a4aa0"/><rect x="976" y="1041" width="30" height="24" rx="3" fill="#f4f4f4"/><path d="M983,1042 V1037 H999 V1042" fill="none" stroke="#18a0e8" stroke-width="2"/><rect x="985" y="1047" width="5" height="5" fill="#f25022"/><rect x="991" y="1047" width="5" height="5" fill="#7fba00"/><rect x="985" y="1053" width="5" height="5" fill="#00a4ef"/><rect x="991" y="1053" width="5" height="5" fill="#ffb900"/><path d="M1046,1036 L1059,1043 V1057 L1046,1064 L1033,1057 V1043Z" fill="#505458"/><path d="M1046,1040 L1055,1056 L1038,1054Z" fill="#1a1c20"/><path d="M1046,1040 L1038,1054 L1036,1046Z" fill="#9aa0a8"/><rect x="1086" y="1035" width="30" height="30" fill="url(#mb)"/><path d="M1090,1059 L1098,1042 H1102 L1094,1059Z M1097,1059 L1105,1042 H1109 L1101,1059Z" fill="#e8e8ff"/><path d="M1106,1059 L1112,1046 V1059Z" fill="#ffffff" opacity="0.8"/><rect x="1141" y="1035" width="30" height="30" rx="2" fill="#127c12"/><circle cx="1156" cy="1051" r="11" fill="#f4f4f4"/><path d="M1148,1043 Q1156,1049 1164,1043 M1147,1059 Q1156,1047 1165,1059" fill="none" stroke="#127c12" stroke-width="2.5"/><circle cx="1167" cy="1039" r="9" fill="#e0a8e8"/><text x="1167" y="1044.5" font-size="14" fill="#202020" text-anchor="middle">2</text><path d="M1203,1043 L1218,1036 L1226,1043 V1062 H1203Z" fill="#1a8ad8"/><path d="M1203,1048 L1226,1043 V1062 H1203Z" fill="#40c0f0"/><rect x="1196" y="1043" width="16" height="16" rx="2" fill="#0a64c0"/><ellipse cx="1204" cy="1051" rx="4.5" ry="5" fill="none" stroke="#fff" stroke-width="2"/><circle cx="1266" cy="1050" r="15" fill="#e03a30"/><path d="M1266,1050 L1253,1057.5 A15,15 0 0 0 1266,1065Z" fill="#2a9a48"/><path d="M1253,1057.5 A15,15 0 0 1 1252,1044 L1266,1050Z" fill="#2a9a48"/><path d="M1266,1050 L1280,1044 A15,15 0 0 1 1266,1065Z" fill="#f8c020"/><circle cx="1266" cy="1050" r="7" fill="#ffffff"/><circle cx="1266" cy="1050" r="5.5" fill="#3a7ae8"/><rect x="1262" y="1071" width="8" height="3.2" rx="1.6" fill="#9aa0ac"/><circle cx="1320" cy="1050" r="14" fill="#2a7ad0"/><circle cx="1320" cy="1050" r="11" fill="#a8d4f4"/><path d="M1308,1043 Q1318,1040 1330,1054" fill="none" stroke="#fff" stroke-width="4"/><path d="M1326,1050 L1336,1052 L1334,1064 L1324,1062Z" fill="#1a60b8"/><rect x="1317" y="1071" width="8" height="3.2" rx="1.6" fill="#9aa0ac"/><rect x="1365" y="1036" width="22" height="29" rx="2" fill="#5ac4f0"/><rect x="1365" y="1062" width="22" height="3" fill="#d06020"/><path d="M1369,1045 H1383 M1369,1050 H1383 M1369,1055 H1383" stroke="#106090" stroke-width="1.6"/><path d="M1368,1036 V1038 M1372,1036 V1038 M1376,1036 V1038 M1380,1036 V1038 M1384,1036 V1038" stroke="#106090" stroke-width="2"/><rect x="1372" y="1071" width="8" height="3.2" rx="1.6" fill="#9aa0ac"/><rect x="1446" y="1025" width="10" height="49" rx="4" fill="#2a2e3a"/><rect x="1406" y="1025" width="44" height="49" rx="4" fill="#30343f"/><rect x="1416" y="1034" width="30" height="8" fill="#ffffff"/><rect x="1418" y="1036" width="26" height="4" fill="#1010e0"/><path d="M1417,1065 V1044 H1424 L1431,1054 L1438,1044 H1445 V1065 H1439 V1053 L1431,1063 L1423,1053 V1065Z" fill="#000" stroke="#fff" stroke-width="1.6"/><rect x="1421" y="1070.5" width="20" height="3.5" rx="1.7" fill="#e0a8f0"/><path d="M1597,1052 L1603,1046 L1609,1052" fill="none" stroke="#fff" stroke-width="1.8"/><text x="1650.5" y="1046" font-size="15" fill="#ffffff" text-anchor="middle">ENG</text><text x="1650.5" y="1066" font-size="15" fill="#ffffff" text-anchor="middle">IN</text><path d="M1688,1046 Q1698,1037 1708,1046 M1691,1049.5 Q1698,1043 1705,1049.5 M1694,1053 Q1698,1049 1702,1053" fill="none" stroke="#fff" stroke-width="1.7"/><circle cx="1698" cy="1056" r="1.7" fill="#fff"/><path d="M1719,1046 H1723 L1729,1041 V1059 L1723,1054 H1719Z" fill="none" stroke="#fff" stroke-width="1.5"/><path d="M1732,1046 Q1735,1050 1732,1054 M1735,1043 Q1740,1050 1735,1057 M1738,1041 Q1744,1050 1738,1059" fill="none" stroke="#fff" stroke-width="1.4"/><path d="M1749,1044 H1764 V1058 H1749Z" fill="none" stroke="#fff" stroke-width="1.5"/><path d="M1753,1040 L1750,1047 H1754 L1751,1054" fill="none" stroke="#fff" stroke-width="1.4"/><path d="M1763,1060 L1758,1055 Q1757,1052 1760,1052 L1763,1054 L1766,1052 Q1769,1052 1768,1055Z" fill="#fff"/><text x="1866" y="1046" font-size="15.5" fill="#ffffff" text-anchor="end">20:40</text><text x="1866" y="1065" font-size="15.5" fill="#ffffff" text-anchor="end">15-11-2024</text><path d="M1879,1056 Q1881,1054 1881,1049 Q1881,1042 1885,1042 Q1889,1042 1889,1049 Q1889,1054 1892,1056Z" fill="#f0b8f0"/><circle cx="1885.5" cy="1058.5" r="2.2" fill="#f0b8f0"/></svg>
<svg style="left:0;top:0" width="100" height="1000" viewBox="0 0 100 1000"><path d="M17,932 L21,923 L25,932 M19,929 H23 M24,923 L27,931 L30,923" fill="none" stroke="#b8b8b8" stroke-width="1.6"/><path d="M16,933 H29 M16,933 L18,931 M16,933 L18,935 M29,933 L27,931 M29,933 L27,935" fill="none" stroke="#5a9ae8" stroke-width="1.2"/><rect x="30.5" y="922.5" width="13.5" height="11" fill="#d8e4f4" stroke="#5a8ad8" stroke-width="1"/><rect x="31" y="923" width="13" height="2.5" fill="#5a8ad8"/><rect x="32" y="927" width="6" height="1.5" fill="#8aaae0"/><path d="M36,935 L41,930" stroke="#6a9ae8" stroke-width="2.5"/><circle cx="52.5" cy="928" r="6.5" fill="#50b050" stroke="#a0d8a0" stroke-width="1"/><path d="M49,928 H56 M52.5,924.5 V931.5" stroke="#fff" stroke-width="2"/><path d="M21,953 V949 Q21,946 25,946 Q29,946 29,949" fill="none" stroke="#c0c0c0" stroke-width="1.8"/><rect x="19.5" y="952" width="13" height="9" fill="#f0c040" stroke="#d0a030" stroke-width="1"/><rect x="25" y="955" width="2" height="3" fill="#a08020"/><path d="M36,958 L44,950" stroke="#6a9ae8" stroke-width="3.2" stroke-linecap="round"/><path d="M43,951 Q42,946 46,945 L45,948 L47,949 L49,947 Q49,951 45,952Z" fill="#d8d8d8"/><circle cx="57.5" cy="951.5" r="6.5" fill="#e85050" stroke="#f0a0a0" stroke-width="1"/><path d="M54,951.5 H61" stroke="#fff" stroke-width="2"/></svg></body></html>
